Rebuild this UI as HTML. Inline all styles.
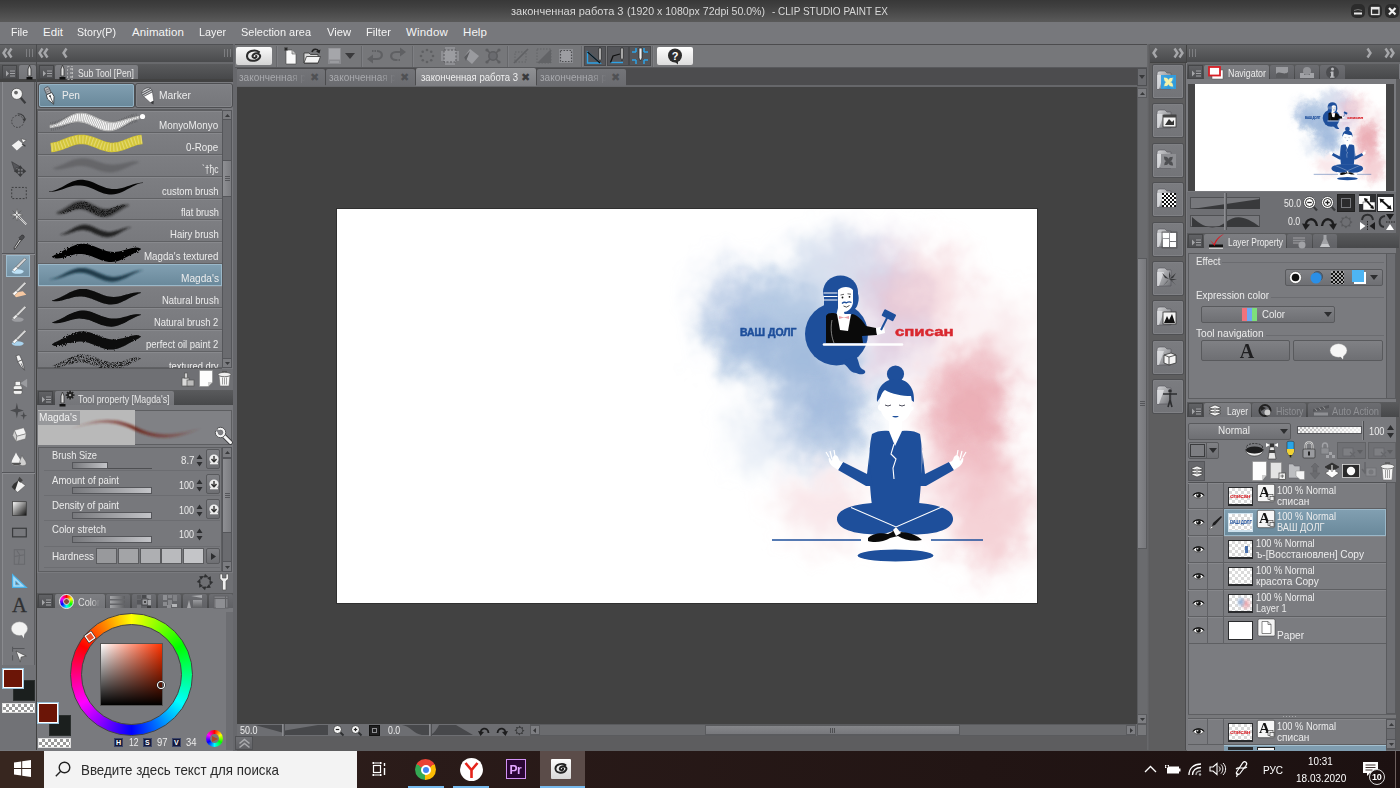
<!DOCTYPE html><html lang="ru"><head><meta charset="utf-8"><title>CLIP STUDIO PAINT EX</title><style>
*{box-sizing:border-box;margin:0;padding:0}
html,body{width:1400px;height:788px;overflow:hidden;background:#424242}
body{position:relative;font-family:"Liberation Sans",sans-serif;font-size:11px;color:#eee}
div,span.t,svg{position:absolute}
svg{overflow:visible}
span.t{white-space:nowrap;line-height:1;color:#ececec}
.pn{background:#797a7e}
.dk{background:linear-gradient(#5a5b5d,#47484a)}
.hd{background:linear-gradient(#646567,#4a4b4d)}
.btn{background:linear-gradient(#808185,#6e6f73);border:1px solid #595a5d;border-radius:2px}
.mb{background:linear-gradient(#616265,#4d4e51);border:1px solid #454648}
.tab{background:linear-gradient(#7d7e82,#747579);border-radius:2px 2px 0 0}
.itab{background:linear-gradient(#6c6d71,#606165);border-radius:2px 2px 0 0}
.row{background:#7a7b7f;border-top:1px solid #8a8b8f;border-bottom:1px solid #5e5f62}
.sel{background:linear-gradient(#86a3b5,#6f8da0);border:1px solid #a9c4d4}
</style></head><body>
<div style="left:0px;top:0px;width:1400px;height:22px;background:linear-gradient(#383838,#404040 30%,#5a5a5a)"></div>
<span class="t" style="left:511.0px;top:6px;font-size:11.5px;transform:scaleX(0.9606);transform-origin:0 0;color:#d8d8d8">законченная работа 3</span>
<span class="t" style="left:627.0px;top:6px;font-size:11.5px;transform:scaleX(0.9186);transform-origin:0 0;color:#d8d8d8">(1920 x 1080px 72dpi 50.0%)</span>
<span class="t" style="left:771.5px;top:6px;font-size:11.5px;transform:scaleX(0.8685);transform-origin:0 0;color:#d8d8d8">- CLIP STUDIO PAINT EX</span>
<div style="left:1351px;top:4px;width:14px;height:14px;background:#2b2b2b;border-radius:5px"><svg style="left:0px;top:0px;" width="14" height="14" viewBox="0 0 14 14"><path d="M3 9.5h8" stroke="#e8e8e8" stroke-width="2"/><path d="M3 6.5 Q7 4.5 11 6.5" stroke="#777" stroke-width="1" fill="none"/></svg></div>
<div style="left:1368px;top:4px;width:14px;height:14px;background:#2b2b2b;border-radius:5px"><svg style="left:0px;top:0px;" width="14" height="14" viewBox="0 0 14 14"><rect x="3.5" y="3.5" width="7.5" height="7" fill="none" stroke="#e8e8e8" stroke-width="1.3"/><path d="M3.5 4.5h7.5" stroke="#e8e8e8" stroke-width="2"/></svg></div>
<div style="left:1385px;top:4px;width:14px;height:14px;background:#2b2b2b;border-radius:5px"><svg style="left:0px;top:0px;" width="14" height="14" viewBox="0 0 14 14"><path d="M4 4 L10.5 10.5 M10.5 4 L4 10.5" stroke="#f0f0f0" stroke-width="2.2"/></svg></div>
<div style="left:0px;top:22px;width:1400px;height:22px;background:#77787c"></div>
<span class="t" style="left:11.0px;top:27px;font-size:11.5px;transform:scaleX(0.9175);transform-origin:0 0;color:#f4f4f4">File</span>
<span class="t" style="left:43.0px;top:27px;font-size:11.5px;letter-spacing:0.046px;color:#f4f4f4">Edit</span>
<span class="t" style="left:77.0px;top:27px;font-size:11.5px;transform:scaleX(0.9248);transform-origin:0 0;color:#f4f4f4">Story(P)</span>
<span class="t" style="left:132.0px;top:27px;font-size:11.5px;letter-spacing:0.096px;color:#f4f4f4">Animation</span>
<span class="t" style="left:199.0px;top:27px;font-size:11.5px;transform:scaleX(0.9387);transform-origin:0 0;color:#f4f4f4">Layer</span>
<span class="t" style="left:241.0px;top:27px;font-size:11.5px;transform:scaleX(0.9522);transform-origin:0 0;color:#f4f4f4">Selection area</span>
<span class="t" style="left:327.0px;top:27px;font-size:11.5px;transform:scaleX(0.9710);transform-origin:0 0;color:#f4f4f4">View</span>
<span class="t" style="left:366.0px;top:27px;font-size:11.5px;transform:scaleX(0.9783);transform-origin:0 0;color:#f4f4f4">Filter</span>
<span class="t" style="left:406.0px;top:27px;font-size:11.5px;letter-spacing:0.183px;color:#f4f4f4">Window</span>
<span class="t" style="left:463.0px;top:27px;font-size:11.5px;letter-spacing:0.087px;color:#f4f4f4">Help</span>
<div style="left:0px;top:44px;width:1400px;height:1px;background:#505154"></div>
<div class="hd" style="left:0px;top:45px;width:36px;height:17px;"></div>
<div class="hd" style="left:37px;top:45px;width:197px;height:17px;"></div>
<div style="left:36px;top:44px;width:1px;height:40px;background:#4a4b4d"></div>
<svg style="left:2px;top:47px;" width="12" height="12" viewBox="0 0 12 12"><path d="M4.5 1.5 L1.5 6 L4.5 10.5" fill="none" stroke="#a6a7aa" stroke-width="2.4"/><path d="M9.5 1.5 L6.5 6 L9.5 10.5" fill="none" stroke="#a6a7aa" stroke-width="2.4"/></svg>
<div style="left:26px;top:49px;width:1px;height:8px;background:#7d7e81"></div><div style="left:29px;top:49px;width:1px;height:8px;background:#7d7e81"></div><div style="left:32px;top:49px;width:1px;height:8px;background:#7d7e81"></div>
<svg style="left:38px;top:47px;" width="12" height="12" viewBox="0 0 12 12"><path d="M4.5 1.5 L1.5 6 L4.5 10.5" fill="none" stroke="#a6a7aa" stroke-width="2.4"/><path d="M9.5 1.5 L6.5 6 L9.5 10.5" fill="none" stroke="#a6a7aa" stroke-width="2.4"/></svg>
<svg style="left:62px;top:47px;" width="12" height="12" viewBox="0 0 12 12"><path d="M4.5 1.5 L1.5 6 L4.5 10.5" fill="none" stroke="#a6a7aa" stroke-width="2.4"/></svg>
<div style="left:224px;top:49px;width:1px;height:8px;background:#7d7e81"></div><div style="left:227px;top:49px;width:1px;height:8px;background:#7d7e81"></div><div style="left:230px;top:49px;width:1px;height:8px;background:#7d7e81"></div>
<div class="hd" style="left:1150px;top:45px;width:36px;height:17px;"></div>
<div class="hd" style="left:1187px;top:45px;width:213px;height:17px;"></div>
<svg style="left:1152px;top:47px;" width="12" height="12" viewBox="0 0 12 12"><path d="M4.5 1.5 L1.5 6 L4.5 10.5" fill="none" stroke="#a6a7aa" stroke-width="2.4"/></svg>
<svg style="left:1173px;top:47px;" width="12" height="12" viewBox="0 0 12 12"><path d="M1.5 1.5 L4.5 6 L1.5 10.5" fill="none" stroke="#a6a7aa" stroke-width="2.4"/><path d="M6.5 1.5 L9.5 6 L6.5 10.5" fill="none" stroke="#a6a7aa" stroke-width="2.4"/></svg>
<div style="left:1189px;top:49px;width:1px;height:8px;background:#7d7e81"></div><div style="left:1192px;top:49px;width:1px;height:8px;background:#7d7e81"></div><div style="left:1195px;top:49px;width:1px;height:8px;background:#7d7e81"></div>
<svg style="left:1366px;top:47px;" width="12" height="12" viewBox="0 0 12 12"><path d="M1.5 1.5 L4.5 6 L1.5 10.5" fill="none" stroke="#a6a7aa" stroke-width="2.4"/></svg>
<svg style="left:1384px;top:47px;" width="12" height="12" viewBox="0 0 12 12"><path d="M1.5 1.5 L4.5 6 L1.5 10.5" fill="none" stroke="#a6a7aa" stroke-width="2.4"/><path d="M6.5 1.5 L9.5 6 L6.5 10.5" fill="none" stroke="#a6a7aa" stroke-width="2.4"/></svg>
<div style="left:0px;top:62px;width:36px;height:2px;background:#68696c"></div>
<div class="dk" style="left:0px;top:64px;width:36px;height:15px;"></div>
<div style="left:37px;top:62px;width:197px;height:2px;background:#68696c"></div>
<div class="dk" style="left:37px;top:64px;width:197px;height:15px;"></div>
<div class="mb" style="left:2px;top:65px;width:15px;height:14px;"><svg style="left:0px;top:0px;" width="15" height="15" viewBox="0 0 15 15"><path d="M3 4.5 L6 7.5 L3 10.5 Z" fill="#a3a4a7"/><path d="M7 5h5M7 7.5h5M7 10h5" stroke="#a3a4a7" stroke-width="1"/></svg></div>
<div class="tab" style="left:19px;top:65px;width:17px;height:14px;"></div>
<svg style="left:26px;top:65px;" width="7" height="15" viewBox="0 0 7 15"><path d="M3.5 0 L5 4 L5 11 L2 11 L2 4 Z" fill="#ddd" stroke="#333" stroke-width="0.8"/><rect x="0.5" y="12" width="6" height="2.5" fill="#111"/></svg>
<div class="mb" style="left:39px;top:65px;width:15px;height:14px;"><svg style="left:0px;top:0px;" width="15" height="15" viewBox="0 0 15 15"><path d="M3 4.5 L6 7.5 L3 10.5 Z" fill="#a3a4a7"/><path d="M7 5h5M7 7.5h5M7 10h5" stroke="#a3a4a7" stroke-width="1"/></svg></div>
<div class="tab" style="left:55px;top:65px;width:83px;height:14px;"></div>
<svg style="left:59px;top:65px;" width="7" height="15" viewBox="0 0 7 15"><path d="M3.5 0 L5 4 L5 11 L2 11 L2 4 Z" fill="#ddd" stroke="#333" stroke-width="0.8"/><rect x="0.5" y="12" width="6" height="2.5" fill="#111"/></svg>
<svg style="left:67px;top:66px;" width="7" height="14" viewBox="0 0 7 14"><rect x="0.5" y="0.5" width="5" height="13" fill="none" stroke="#bbb" stroke-width="0.8" stroke-dasharray="2 1.5"/><path d="M3 3h3M3 7h3M3 11h3" stroke="#ccc" stroke-width="1"/></svg>
<span class="t" style="left:78.0px;top:68px;font-size:10.5px;transform:scaleX(0.8223);transform-origin:0 0;color:#e6e6e6">Sub Tool [Pen]</span>
<div style="left:235px;top:44px;width:912px;height:24px;background:#76777a;border-top:1px solid #4c4c4e;border-bottom:1px solid #58595c"></div>
<div style="left:236px;top:47px;width:36px;height:18px;background:linear-gradient(#fbfbfb,#d4d4d4);border-radius:2px"><svg style="left:8px;top:1px;" width="21" height="16" viewBox="0 0 18 14"><path d="M13 3.5 C9 0.5 2 3 2.5 7.5 C3 12 11 12.5 13.5 8.5 C15 6 12 4 9.5 4.8 C7 5.6 6.5 8 8.5 8.6 C10 9 11 8 10.5 7" fill="none" stroke="#2b2b2b" stroke-width="1.8" stroke-linecap="round"/></svg></div>
<div style="left:276px;top:46px;width:1px;height:21px;background:#66676a"></div>
<div style="left:277px;top:46px;width:1px;height:21px;background:#7e7f83"></div>
<div style="left:361px;top:46px;width:1px;height:21px;background:#66676a"></div>
<div style="left:362px;top:46px;width:1px;height:21px;background:#7e7f83"></div>
<div style="left:412px;top:46px;width:1px;height:21px;background:#66676a"></div>
<div style="left:413px;top:46px;width:1px;height:21px;background:#7e7f83"></div>
<div style="left:507px;top:46px;width:1px;height:21px;background:#66676a"></div>
<div style="left:508px;top:46px;width:1px;height:21px;background:#7e7f83"></div>
<div style="left:581px;top:46px;width:1px;height:21px;background:#66676a"></div>
<div style="left:582px;top:46px;width:1px;height:21px;background:#7e7f83"></div>
<div style="left:652px;top:46px;width:1px;height:21px;background:#66676a"></div>
<div style="left:653px;top:46px;width:1px;height:21px;background:#7e7f83"></div>
<svg style="left:284px;top:47px;" width="14" height="18" viewBox="0 0 14 18"><path d="M2 3 L8 3 L12 7 L12 17 L2 17 Z" fill="#fafafa" stroke="#444" stroke-width="0.6"/><path d="M8 3 L8 7 L12 7" fill="#ccc" stroke="#555" stroke-width="0.6"/><path d="M0 2 L4 2 M2 0 L2 4 M0.6 0.6 L3.4 3.4 M3.4 0.6 L0.6 3.4" stroke="#222" stroke-width="0.8"/></svg>
<svg style="left:303px;top:47px;" width="18" height="18" viewBox="0 0 18 18"><path d="M1 16 L1 6 L6 6 L7.5 7.5 L15 7.5 L15 16 Z" fill="#d8d8d8" stroke="#333" stroke-width="0.8"/><path d="M1 16 L3.5 9.5 L17.5 9.5 L15 16 Z" fill="#f4f4f4" stroke="#333" stroke-width="0.8"/><path d="M9 5 C10 1.5 14 1.5 15.5 4" fill="none" stroke="#222" stroke-width="1.6"/><path d="M17.5 2.5 L16.5 6.5 L13 4.5 Z" fill="#222"/></svg>
<svg style="left:327px;top:47px;" width="16" height="18" viewBox="0 0 16 18"><rect x="1" y="1" width="13" height="16" fill="#8a8b8f"/><rect x="2" y="1.5" width="11" height="11" fill="#a5a6aa"/><rect x="3" y="14" width="9" height="2" fill="#9a9b9f"/></svg>
<svg style="left:345px;top:53px;" width="10" height="6" viewBox="0 0 10 6"><path d="M0 0 L10 0 L5 6 Z" fill="#3a3a3c"/></svg>
<svg style="left:367px;top:47px;" width="18" height="18" viewBox="0 0 18 18"><path d="M5 4 H10" stroke="#5f6063" stroke-width="2" stroke-dasharray="1.500 1"/><path d="M10 4 C16.500 4 16.500 12 10 12 H5" fill="none" stroke="#5f6063" stroke-width="2.200"/><path d="M0 12 L6 7.500 L6 16.500 Z" fill="#5f6063"/></svg>
<svg style="left:388px;top:47px;" width="18" height="18" viewBox="0 0 18 18"><path d="M8 13 H13" stroke="#5f6063" stroke-width="2" stroke-dasharray="1.500 1"/><path d="M8 13 C1.500 13 1.500 5 8 5 H13" fill="none" stroke="#5f6063" stroke-width="2.200"/><path d="M18 5 L12 0.500 L12 9.500 Z" fill="#5f6063"/></svg>
<svg style="left:419px;top:48px;" width="16" height="16" viewBox="0 0 16 16"><circle cx="14.0" cy="8.0" r="1.3" fill="#5f6063"/><circle cx="12.2" cy="12.2" r="1.3" fill="#5f6063"/><circle cx="8.0" cy="14.0" r="1.3" fill="#5f6063"/><circle cx="3.8" cy="12.2" r="1.3" fill="#5f6063"/><circle cx="2.0" cy="8.0" r="1.3" fill="#5f6063"/><circle cx="3.7" cy="3.8" r="1.3" fill="#5f6063"/><circle cx="8.0" cy="2.0" r="1.3" fill="#5f6063"/><circle cx="12.2" cy="3.7" r="1.3" fill="#5f6063"/></svg>
<svg style="left:440px;top:47px;" width="20" height="18" viewBox="0 0 20 18"><rect x="1" y="4" width="18" height="10" fill="#8e8f93"/><rect x="5" y="0" width="10" height="18" fill="#8e8f93"/><rect x="4" y="3" width="12" height="12" fill="#9c9da1" stroke="#56575a" stroke-width="1" stroke-dasharray="2 1.5"/></svg>
<svg style="left:462px;top:47px;" width="18" height="18" viewBox="0 0 18 18"><path d="M8 2 L17 9 L10 17 L2 10 Z" fill="#9a9b9f"/><path d="M2 10 L8 4 L4 14 Z" fill="#5c5d60"/></svg>
<svg style="left:485px;top:48px;" width="16" height="16" viewBox="0 0 16 16"><path d="M2 2 L14 14 M14 2 L2 14" stroke="#5d5e61" stroke-width="1.6"/><circle cx="8" cy="8" r="4.2" fill="#6a6b6f" stroke="#5d5e61" stroke-width="1.6"/><circle cx="2" cy="2" r="1.6" fill="#5d5e61"/><circle cx="14" cy="2" r="1.6" fill="#5d5e61"/><circle cx="2" cy="14" r="1.6" fill="#5d5e61"/><circle cx="14" cy="14" r="1.6" fill="#5d5e61"/></svg>
<svg style="left:513px;top:48px;" width="16" height="16" viewBox="0 0 16 16"><path d="M1 15 L15 1" stroke="#5f6063" stroke-width="1.6"/><rect x="2" y="4" width="11" height="10" fill="none" stroke="#636467" stroke-width="1" stroke-dasharray="1.5 1.5"/></svg>
<svg style="left:536px;top:48px;" width="16" height="16" viewBox="0 0 16 16"><path d="M1 15 L15 1 L15 15 Z" fill="#626366"/><rect x="1" y="1" width="14" height="14" fill="none" stroke="#636467" stroke-width="1" stroke-dasharray="1.5 1.5"/></svg>
<svg style="left:558px;top:48px;" width="16" height="16" viewBox="0 0 16 16"><rect x="1" y="1" width="14" height="14" fill="#8d8e92"/><rect x="2.5" y="2.5" width="11" height="11" fill="#9d9ea2" stroke="#4e4f52" stroke-width="1.2" stroke-dasharray="1.5 1.5"/></svg>
<div style="left:584px;top:46px;width:22px;height:20px;background:#55565a;border:1px solid #48494c"></div>
<div style="left:607px;top:46px;width:22px;height:20px;background:#55565a;border:1px solid #48494c"></div>
<div style="left:629px;top:46px;width:22px;height:20px;background:#55565a;border:1px solid #48494c"></div>
<svg style="left:586px;top:47px;" width="18" height="18" viewBox="0 0 18 18"><path d="M1.5 5 L1.5 16 L14 16 Z" fill="none" stroke="#2ea3e6" stroke-width="1.4"/><path d="M1.5 5 L14 16" stroke="#111" stroke-width="1.3"/><path d="M13 1 L15 1 L15 12 L14 15 L13 12 Z" fill="#eee" stroke="#222" stroke-width="0.7"/></svg>
<svg style="left:609px;top:47px;" width="18" height="18" viewBox="0 0 18 18"><path d="M1.5 15.5 L14 15.5" stroke="#2ea3e6" stroke-width="1.4"/><path d="M1.5 15.5 L4 9 L11 7" fill="none" stroke="#111" stroke-width="1.3"/><path d="M12 1 L14 1 L14 11 L13 14 L12 11 Z" fill="#eee" stroke="#222" stroke-width="0.7"/></svg>
<svg style="left:631px;top:47px;" width="18" height="18" viewBox="0 0 18 18"><path d="M1 5h4M1 13h4M13 5h4M13 13h4M5 1v4M5 13v4M13 1v4M13 13v4" stroke="#2ea3e6" stroke-width="1.5"/><path d="M8 1 L11 1 L11 11 L9.5 14 L8 11 Z" fill="#eee" stroke="#222" stroke-width="0.7"/></svg>
<div style="left:657px;top:47px;width:36px;height:18px;background:linear-gradient(#ffffff,#dcdcdc);border-radius:2px"><svg style="left:10px;top:1px;" width="16" height="16" viewBox="0 0 16 16"><circle cx="8" cy="7.5" r="7" fill="#2d2d2d"/><path d="M8 14 L11 16.5 L11 13 Z" fill="#2d2d2d"/><text x="8" y="11.5" font-size="11" font-weight="bold" text-anchor="middle" fill="#fff" font-family="Liberation Sans, sans-serif">?</text></svg></div>
<div style="left:235px;top:68px;width:912px;height:19px;background:#4c4c4e"></div>
<div style="left:235px;top:85px;width:912px;height:2px;background:#66676a"></div>
<div style="left:236px;top:69px;width:89px;height:17px;background:linear-gradient(#737478,#6b6c70);border-radius:2px 2px 0 0"></div>
<span class="t" style="left:239.0px;top:72px;font-size:10.5px;transform:scaleX(0.9546);transform-origin:0 0;color:#a9aaae;-webkit-mask-image:linear-gradient(90deg,#000 75%,transparent 100%)">законченная р</span>
<span class="t" style="left:310.0px;top:72px;font-size:10.5px;color:#505154">&#10006;</span>
<div style="left:326px;top:69px;width:89px;height:17px;background:linear-gradient(#737478,#6b6c70);border-radius:2px 2px 0 0"></div>
<span class="t" style="left:329.0px;top:72px;font-size:10.5px;transform:scaleX(0.9546);transform-origin:0 0;color:#a9aaae;-webkit-mask-image:linear-gradient(90deg,#000 75%,transparent 100%)">законченная р</span>
<span class="t" style="left:400.0px;top:72px;font-size:10.5px;color:#505154">&#10006;</span>
<div style="left:416px;top:68px;width:120px;height:18px;background:linear-gradient(#909194,#7d7e82);border-radius:2px 2px 0 0"></div>
<span class="t" style="left:421.0px;top:72px;font-size:10.5px;transform:scaleX(0.9071);transform-origin:0 0;color:#f0f0f0">законченная работа 3</span>
<span class="t" style="left:521.0px;top:72px;font-size:10.5px;color:#3a3a3c">&#10006;</span>
<div style="left:537px;top:69px;width:89px;height:17px;background:linear-gradient(#737478,#6b6c70);border-radius:2px 2px 0 0"></div>
<span class="t" style="left:540.0px;top:72px;font-size:10.5px;transform:scaleX(0.9546);transform-origin:0 0;color:#a9aaae;-webkit-mask-image:linear-gradient(90deg,#000 75%,transparent 100%)">законченная р</span>
<span class="t" style="left:611.0px;top:72px;font-size:10.5px;color:#505154">&#10006;</span>
<div style="left:1137px;top:68px;width:10px;height:18px;background:#6a6b6f;border:1px solid #4e4f52"><svg style="left:1px;top:6px;" width="6" height="4" viewBox="0 0 6 4"><path d="M0 0 L6 0 L3 4 Z" fill="#38393b"/></svg></div>
<div style="left:0px;top:82px;width:36px;height:668px;background:#717276"></div>
<div style="left:2px;top:82px;width:33px;height:583px;background:#77787c;border-left:1px solid #8a8b8f;border-right:1px solid #5c5d60"></div>
<div style="left:2px;top:253px;width:33px;height:1px;background:#55565a"></div>
<div style="left:2px;top:254px;width:33px;height:1px;background:#8b8c90"></div>
<div style="left:2px;top:472px;width:33px;height:1px;background:#55565a"></div>
<div style="left:2px;top:473px;width:33px;height:1px;background:#8b8c90"></div>
<div style="left:6px;top:255px;width:24px;height:22px;background:linear-gradient(#88a5b7,#7391a4);border:1px solid #9dbbcd"></div>
<svg style="left:10px;top:87px;" width="18" height="18" viewBox="0 0 21 21"><circle cx="8" cy="8" r="6.5" fill="#f2f2f2" stroke="#555" stroke-width="1"/><circle cx="7" cy="6.5" r="2.2" fill="#666"/><path d="M12.5 12.5 L18 19" stroke="#3a3b3d" stroke-width="2.6"/></svg>
<svg style="left:10px;top:112px;" width="18" height="18" viewBox="0 0 21 21"><circle cx="9" cy="11" r="7" fill="none" stroke="#3a3b3d" stroke-width="1" stroke-dasharray="2 1.6"/><path d="M9 2 C15 2 18 6 17 10" fill="none" stroke="#3a3b3d" stroke-width="1.2"/><path d="M14.5 8 L17 11.5 L19 7.5 Z" fill="#3a3b3d"/></svg>
<svg style="left:10px;top:136px;" width="18" height="18" viewBox="0 0 21 21"><path d="M2 11 L10 5 L16 10 L8 17 Z" fill="#f2f2f2"/><path d="M13 3 L19 5 L15 8 Z" fill="#f2f2f2" stroke="#444" stroke-width="0.6"/><path d="M14 9 L18 12" stroke="#3a3b3d" stroke-width="1.2"/></svg>
<svg style="left:10px;top:160px;" width="18" height="18" viewBox="0 0 21 21"><path d="M2 2 L12 8 L7 9 L6 14 Z" fill="#55565a" stroke="#3a3b3d" stroke-width="0.8"/><path d="M12 7 L12 19 M6 13 L18 13 M12 19 l-2 -2.5 h4 Z M12 7 l-2 2.5 h4 Z M6 13 l2.5 -2 v4 Z M18 13 l-2.5 -2 v4 Z" stroke="#3a3b3d" stroke-width="1.2" fill="#3a3b3d"/></svg>
<svg style="left:10px;top:184px;" width="18" height="18" viewBox="0 0 21 21"><rect x="2" y="4" width="17" height="13" fill="none" stroke="#3a3b3d" stroke-width="1.1" stroke-dasharray="2.2 1.8"/></svg>
<svg style="left:10px;top:208px;" width="18" height="18" viewBox="0 0 21 21"><path d="M9 9 L19 19" stroke="#eee" stroke-width="2"/><path d="M9 9 L19 19" stroke="#555" stroke-width="0.6"/><path d="M8 1 L9.5 6.5 L15 8 L9.5 9.5 L8 15 L6.5 9.5 L1 8 L6.5 6.5 Z" fill="#f2f2f2" stroke="#555" stroke-width="0.6"/><path d="M3 3 L13 13 M13 3 L3 13" stroke="#555" stroke-width="0.8"/></svg>
<svg style="left:10px;top:233px;" width="18" height="18" viewBox="0 0 21 21"><path d="M13 3 C15 1 18 4 16 6 L13.5 8.5 L10.5 5.5 Z" fill="#4a4b4e" stroke="#2a2a2b" stroke-width="0.7"/><path d="M11.5 7 L13 8.500 L6.500 18 L5 19 L5 17 Z" fill="#ddd" stroke="#2a2a2b" stroke-width="1"/></svg>
<svg style="left:10px;top:257px;" width="18" height="18" viewBox="0 0 21 21"><ellipse cx="9" cy="17" rx="7" ry="2.6" fill="#bfe2f7"/><path d="M17 1 L19 3 L9 13 L7 11 Z" fill="#d8d8d8" stroke="#555" stroke-width="0.6"/><path d="M7 11 L9 13 L5 17 L3 15 Z" fill="#fff" stroke="#666" stroke-width="0.5"/></svg>
<svg style="left:10px;top:281px;" width="18" height="18" viewBox="0 0 21 21"><path d="M3 14 L15 12 L19 16 L7 19 Z" fill="#f6c8a2"/><ellipse cx="9" cy="17" rx="7" ry="2.6" fill="none"/><path d="M17 1 L19 3 L9 13 L7 11 Z" fill="#d8d8d8" stroke="#555" stroke-width="0.6"/><path d="M7 11 L9 13 L5 17 L3 15 Z" fill="#fff" stroke="#666" stroke-width="0.5"/></svg>
<svg style="left:10px;top:305px;" width="18" height="18" viewBox="0 0 21 21"><ellipse cx="9" cy="17" rx="7" ry="2.6" fill="#9c9da1"/><path d="M17 1 L19 3 L9 13 L7 11 Z" fill="#d8d8d8" stroke="#555" stroke-width="0.6"/><path d="M7 11 L9 13 L5 17 L3 15 Z" fill="#eee" stroke="#666" stroke-width="0.5"/></svg>
<svg style="left:10px;top:329px;" width="18" height="18" viewBox="0 0 21 21"><ellipse cx="9" cy="17" rx="7" ry="2.6" fill="#a9d3ee"/><path d="M17 1 L19 3 L9 13 L7 11 Z" fill="#d8d8d8" stroke="#555" stroke-width="0.6"/><path d="M7 11 L9 13 L5 17 L3 15 Z" fill="#fff" stroke="#666" stroke-width="0.5"/></svg>
<svg style="left:10px;top:354px;" width="18" height="18" viewBox="0 0 21 21"><path d="M7 2 L11 1 L14 7 L9 9 Z" fill="#f2f2f2" stroke="#3a3b3d" stroke-width="0.7"/><path d="M9 9 L14 7 L16 14 L17 19 L13 15 Z" fill="#f2f2f2" stroke="#3a3b3d" stroke-width="0.7"/><path d="M13 11 L16 18" stroke="#3a3b3d" stroke-width="0.8"/></svg>
<svg style="left:10px;top:378px;" width="18" height="18" viewBox="0 0 21 21"><path d="M12 6 L20 1 L20 11 Z" fill="#9a9b9f"/><rect x="4" y="9" width="10" height="10" rx="2" fill="#f2f2f2" stroke="#555" stroke-width="0.6"/><rect x="6" y="4" width="6" height="5" fill="#f2f2f2" stroke="#555" stroke-width="0.6"/><rect x="4" y="13" width="10" height="2" fill="#555"/></svg>
<svg style="left:10px;top:402px;" width="18" height="18" viewBox="0 0 21 21"><path d="M8 1 L9.5 8 L16 10 L9.5 12 L8 19 L6.5 12 L0 10 L6.5 8 Z" fill="#4a4b4e"/><path d="M16 11 L17 15 L20 16 L17 17 L16 21 L15 17 L12 16 L15 15 Z" fill="#4a4b4e"/></svg>
<svg style="left:10px;top:426px;" width="18" height="18" viewBox="0 0 21 21"><path d="M5 5 L16 2 L19 9 L8 12 Z" fill="#f2f2f2" stroke="#666" stroke-width="0.6"/><path d="M5 5 L8 12 L7 18 L3 11 Z" fill="#cfcfcf" stroke="#666" stroke-width="0.6"/><path d="M8 12 L19 9 L18 15 L7 18 Z" fill="#e4e4e4" stroke="#666" stroke-width="0.6"/></svg>
<svg style="left:10px;top:450px;" width="18" height="18" viewBox="0 0 21 21"><path d="M7 3 C9 8 13 11 13 15 C13 19 2 19 2 15 C2 11 5 8 7 3 Z" fill="#f2f2f2"/><path d="M14 6 C15 10 19 12 19 16 C19 19 11 19 11 16 C11 12 13 10 14 6 Z" fill="#d0d0d0" stroke="#555" stroke-width="0.5"/><path d="M2 15 C2 19 13 19 13 15 Z" fill="#555"/></svg>
<svg style="left:10px;top:476px;" width="18" height="18" viewBox="0 0 21 21"><path d="M2 13 L10 5 L18 11 L9 19 Z" fill="#f2f2f2" stroke="#444" stroke-width="0.6"/><path d="M2 13 C4 9 6 8 10 5 L6 17 Z" fill="#333"/><path d="M11 1 L15 5 L12 8 L9 5 Z" fill="#444"/></svg>
<svg style="left:10px;top:500px;" width="18" height="18" viewBox="0 0 21 21"><defs><linearGradient id="tg" x1="0" y1="0" x2="1" y2="1"><stop offset="0" stop-color="#fff"/><stop offset="1" stop-color="#111"/></linearGradient></defs><rect x="3" y="2" width="16" height="16" fill="url(#tg)" stroke="#333" stroke-width="0.8"/></svg>
<svg style="left:10px;top:524px;" width="18" height="18" viewBox="0 0 21 21"><rect x="3" y="5" width="16" height="10" fill="none" stroke="#3a3b3d" stroke-width="1.4"/></svg>
<svg style="left:10px;top:548px;" width="18" height="18" viewBox="0 0 21 21"><rect x="5" y="2" width="12" height="17" fill="none" stroke="#68696d" stroke-width="1.2"/><path d="M5 10 L17 8 M11 9 L10 19 M8 3 L12 9" stroke="#68696d" stroke-width="1.2"/></svg>
<svg style="left:10px;top:572px;" width="18" height="18" viewBox="0 0 21 21"><path d="M3 3 L19 18 L3 18 Z" fill="#a5daf6" stroke="#49b2ea" stroke-width="1.400"/><path d="M6.500 10.500 L11 15 L6.500 15 Z" fill="#77787c" stroke="#49b2ea" stroke-width="0.800"/></svg>
<svg style="left:10px;top:596px;" width="18" height="18" viewBox="0 0 21 21"><text x="11" y="19" font-family="Liberation Serif, serif" font-size="24" text-anchor="middle" fill="#2f3032" stroke="#2f3032" stroke-width="0.400">A</text></svg>
<svg style="left:10px;top:621px;" width="18" height="18" viewBox="0 0 21 21"><ellipse cx="11" cy="9" rx="9.5" ry="8" fill="#f2f2f2" stroke="#999" stroke-width="0.5"/><path d="M13 15 L16 20 L17 14 Z" fill="#f2f2f2"/></svg>
<svg style="left:10px;top:645px;" width="18" height="18" viewBox="0 0 21 21"><path d="M3 2 L3 8 M3 12 L3 18 M3 4 L17 4" stroke="#55565a" stroke-width="1.2"/><path d="M7 7 L19 13 L13 14 L12 20 Z" fill="#f2f2f2" stroke="#444" stroke-width="0.8"/></svg>
<div style="left:13px;top:680px;width:22px;height:21px;background:#1b1f1e;border:1px solid #2b2f2e"></div><div style="left:2px;top:668px;width:22px;height:21px;background:#6b1507;border:1px solid #9ac3dc;box-shadow:inset 0 0 0 1px #fff"></div><div style="left:2px;top:703px;width:33px;height:10px;background-color:#fff;background-image:linear-gradient(45deg,#999 25%,transparent 25%,transparent 75%,#999 75%),linear-gradient(45deg,#999 25%,transparent 25%,transparent 75%,#999 75%);background-size:6px 6px;background-position:0 0,3px 3px;border:1px solid #ddd"></div>
<div class="pn" style="left:37px;top:82px;width:197px;height:668px;"></div>
<div style="left:234px;top:44px;width:1px;height:706px;background:#3e3f41"></div>
<div style="left:39px;top:84px;width:95px;height:23px;background:linear-gradient(#809eb0,#6a899b);border:1px solid #93b2c4;border-radius:2px;box-shadow:0 0 0 1px #4e4f52"></div>
<div style="left:136px;top:84px;width:96px;height:23px;background:linear-gradient(#7f8084,#76777b);border:1px solid #838488;border-radius:2px;box-shadow:0 0 0 1px #4e4f52"></div>
<svg style="left:43px;top:86px;" width="14" height="20" viewBox="0 0 14 20"><g transform="rotate(-24 7 10)"><rect x="4.500" y="0.500" width="5" height="7" rx="1.500" fill="#b4b5b8" stroke="#3a3b3d" stroke-width="0.600"/><path d="M5 3h4M5 5h4" stroke="#6a6b6f" stroke-width="0.700"/><path d="M4 7.500 L10 7.500 L10.500 12 L7 19 L3.500 12 Z" fill="#fdfdfd" stroke="#2d2e30" stroke-width="0.700"/><path d="M7 10 V18" stroke="#2d2e30" stroke-width="0.700"/><circle cx="7" cy="10" r="0.900" fill="#2d2e30"/></g></svg>
<span class="t" style="left:62.0px;top:90px;font-size:11.5px;transform:scaleX(0.8797);transform-origin:0 0;">Pen</span>
<svg style="left:141px;top:86px;" width="16" height="20" viewBox="0 0 16 20"><g transform="rotate(-28 8 10)"><path d="M2.500 5 C3 0.500 13 0.500 13.500 5 L13 8 L3 8 Z" fill="#d0d1d4" stroke="#4a4b4e" stroke-width="0.600"/><path d="M2.800 4 H13.200 M2.600 6 H13.400" stroke="#55565a" stroke-width="0.900"/><path d="M3 8 L13 8 L10 16.500 L6 16.500 Z" fill="#fdfdfd" stroke="#55565a" stroke-width="0.600"/><path d="M6 16.500 L10 16.500 L8 19.500 Z" fill="#3a3b3d"/></g></svg>
<span class="t" style="left:159.0px;top:90px;font-size:11.5px;transform:scaleX(0.8944);transform-origin:0 0;">Marker</span>
<div style="left:37px;top:109px;width:185px;height:260px;background:#5c5d60"></div>
<div style="left:38px;top:111px;width:184px;height:22px;background:linear-gradient(#7d7e82,#78797d);border-top:1px solid #88898d;border-bottom:1px solid #606164"></div>
<span class="t" style="left:159.4px;top:120px;font-size:10.5px;transform:scaleX(0.9377);transform-origin:0 0;">MonyoMonyo</span>
<div style="left:38px;top:133px;width:184px;height:22px;background:linear-gradient(#7d7e82,#78797d);border-top:1px solid #88898d;border-bottom:1px solid #606164"></div>
<span class="t" style="left:186.3px;top:142px;font-size:10.5px;transform:scaleX(0.9351);transform-origin:0 0;">0-Rope</span>
<div style="left:38px;top:155px;width:184px;height:22px;background:linear-gradient(#7d7e82,#78797d);border-top:1px solid #88898d;border-bottom:1px solid #606164"></div>
<span class="t" style="left:202.0px;top:164px;font-size:10.5px;transform:scaleX(0.8079);transform-origin:0 0;">`†ђс</span>
<div style="left:38px;top:177px;width:184px;height:22px;background:linear-gradient(#7d7e82,#78797d);border-top:1px solid #88898d;border-bottom:1px solid #606164"></div>
<span class="t" style="left:161.9px;top:186px;font-size:10.5px;transform:scaleX(0.8981);transform-origin:0 0;">custom brush</span>
<div style="left:38px;top:199px;width:184px;height:21px;background:linear-gradient(#7d7e82,#78797d);border-top:1px solid #88898d;border-bottom:1px solid #606164"></div>
<span class="t" style="left:180.5px;top:207px;font-size:10.5px;transform:scaleX(0.8799);transform-origin:0 0;">flat brush</span>
<div style="left:38px;top:220px;width:184px;height:22px;background:linear-gradient(#7d7e82,#78797d);border-top:1px solid #88898d;border-bottom:1px solid #606164"></div>
<span class="t" style="left:169.8px;top:229px;font-size:10.5px;transform:scaleX(0.9072);transform-origin:0 0;">Hairy brush</span>
<div style="left:38px;top:242px;width:184px;height:22px;background:linear-gradient(#7d7e82,#78797d);border-top:1px solid #88898d;border-bottom:1px solid #606164"></div>
<span class="t" style="left:144.1px;top:251px;font-size:10.5px;transform:scaleX(0.9276);transform-origin:0 0;">Magda's textured</span>
<div style="left:38px;top:264px;width:184px;height:22px;background:linear-gradient(#819fb1,#6a899b);border:1px solid #9bb8c9"></div>
<span class="t" style="left:180.5px;top:273px;font-size:10.5px;transform:scaleX(0.9655);transform-origin:0 0;">Magda's</span>
<div style="left:38px;top:286px;width:184px;height:22px;background:linear-gradient(#7d7e82,#78797d);border-top:1px solid #88898d;border-bottom:1px solid #606164"></div>
<span class="t" style="left:161.6px;top:295px;font-size:10.5px;transform:scaleX(0.9028);transform-origin:0 0;">Natural brush</span>
<div style="left:38px;top:308px;width:184px;height:22px;background:linear-gradient(#7d7e82,#78797d);border-top:1px solid #88898d;border-bottom:1px solid #606164"></div>
<span class="t" style="left:154.3px;top:317px;font-size:10.5px;transform:scaleX(0.8944);transform-origin:0 0;">Natural brush 2</span>
<div style="left:38px;top:330px;width:184px;height:22px;background:linear-gradient(#7d7e82,#78797d);border-top:1px solid #88898d;border-bottom:1px solid #606164"></div>
<span class="t" style="left:146.2px;top:339px;font-size:10.5px;transform:scaleX(0.9042);transform-origin:0 0;">perfect oil paint 2</span>
<div style="left:38px;top:352px;width:184px;height:16px;background:linear-gradient(#7d7e82,#78797d);border-top:1px solid #88898d;border-bottom:1px solid #606164"></div>
<div style="left:38px;top:352px;width:184px;height:16px;overflow:hidden"><span class="t" style="left:131.0px;top:9px;font-size:10.5px;transform:scaleX(0.8929);transform-origin:0 0;">textured dry</span></div>
<div style="left:38px;top:110px;width:184px;height:258px;overflow:hidden"><svg style="left:-38px;top:-110px;" width="222" height="368" viewBox="0 0 222 368"><defs><filter id="b1"><feGaussianBlur stdDeviation="1"/></filter><filter id="b2"><feGaussianBlur stdDeviation="1.8"/></filter><filter id="b05"><feGaussianBlur stdDeviation="0.6"/></filter><filter id="rough"><feTurbulence type="fractalNoise" baseFrequency="0.9" numOctaves="2" seed="3" result="n"/><feDisplacementMap in="SourceGraphic" in2="n" scale="3"/></filter><filter id="spk"><feTurbulence type="fractalNoise" baseFrequency="1.2" numOctaves="2" seed="8" result="n"/><feColorMatrix in="n" type="matrix" values="0 0 0 0 0 0 0 0 0 0 0 0 0 0 0 0 0 0 -4 2.4" result="m"/><feComposite in="SourceGraphic" in2="m" operator="in"/></filter></defs><path d="M50.0 125.2 L52.5 125.0 L54.9 124.4 L57.4 123.4 L59.9 122.1 L62.4 120.6 L64.8 119.1 L67.3 117.6 L69.8 116.2 L72.2 115.1 L74.7 114.1 L77.2 113.5 L79.7 113.1 L82.1 113.1 L84.6 113.4 L87.1 113.9 L89.6 114.7 L92.0 115.7 L94.5 116.8 L97.0 118.0 L99.4 119.1 L101.9 120.1 L104.4 121.0 L106.9 121.7 L109.3 122.1 L111.8 122.3 L114.3 122.2 L116.8 121.9 L119.2 121.3 L121.7 120.7 L124.2 119.9 L126.6 119.2 L129.1 118.5 L131.6 117.9 L134.1 117.3 L136.5 116.7 L139.0 116.3 L139.0 118.8 L136.5 119.2 L134.1 119.8 L131.6 120.8 L129.1 122.3 L126.6 123.8 L124.2 125.3 L121.7 126.7 L119.2 128.1 L116.8 129.2 L114.3 130.0 L111.8 130.6 L109.3 130.9 L106.9 130.8 L104.4 130.5 L101.9 129.8 L99.4 129.0 L97.0 127.9 L94.5 126.8 L92.0 125.7 L89.6 124.6 L87.1 123.6 L84.6 122.8 L82.1 122.2 L79.7 121.9 L77.2 121.8 L74.7 122.0 L72.2 122.4 L69.8 123.0 L67.3 123.7 L64.8 124.4 L62.4 125.2 L59.9 125.9 L57.4 126.4 L54.9 126.9 L52.5 127.5 L50.0 127.7 Z" fill="#f6f6f6" stroke="#3a3a3a" stroke-width="0.8"/><path d="M51.0 126.5 L53.4 126.2 L55.8 125.7 L58.2 124.9 L60.7 124.0 L63.1 122.9 L65.5 121.8 L67.9 120.6 L70.3 119.6 L72.8 118.7 L75.2 118.1 L77.6 117.6 L80.0 117.5 L82.4 117.7 L84.8 118.1 L87.2 118.8 L89.7 119.7 L92.1 120.7 L94.5 121.8 L96.9 122.9 L99.3 124.0 L101.8 125.0 L104.2 125.7 L106.6 126.2 L109.0 126.5 L111.4 126.4 L113.8 126.1 L116.2 125.5 L118.7 124.7 L121.1 123.7 L123.5 122.6 L125.9 121.5 L128.3 120.4 L130.8 119.4 L133.2 118.5 L135.6 117.9 L138.0 117.6" fill="none" stroke="#444" stroke-width="9" stroke-dasharray="0.5 1.3" opacity=".55"/><path d="M50.0 125.2 L52.5 125.0 L54.9 124.4 L57.4 123.4 L59.9 122.1 L62.4 120.6 L64.8 119.1 L67.3 117.6 L69.8 116.2 L72.2 115.1 L74.7 114.1 L77.2 113.5 L79.7 113.1 L82.1 113.1 L84.6 113.4 L87.1 113.9 L89.6 114.7 L92.0 115.7 L94.5 116.8 L97.0 118.0 L99.4 119.1 L101.9 120.1 L104.4 121.0 L106.9 121.7 L109.3 122.1 L111.8 122.3 L114.3 122.2 L116.8 121.9 L119.2 121.3 L121.7 120.7 L124.2 119.9 L126.6 119.2 L129.1 118.5 L131.6 117.9 L134.1 117.3 L136.5 116.7 L139.0 116.3 L139.0 118.8 L136.5 119.2 L134.1 119.8 L131.6 120.8 L129.1 122.3 L126.6 123.8 L124.2 125.3 L121.7 126.7 L119.2 128.1 L116.8 129.2 L114.3 130.0 L111.8 130.6 L109.3 130.9 L106.9 130.8 L104.4 130.5 L101.9 129.8 L99.4 129.0 L97.0 127.9 L94.5 126.8 L92.0 125.7 L89.6 124.6 L87.1 123.6 L84.6 122.8 L82.1 122.2 L79.7 121.9 L77.2 121.8 L74.7 122.0 L72.2 122.4 L69.8 123.0 L67.3 123.7 L64.8 124.4 L62.4 125.2 L59.9 125.9 L57.4 126.4 L54.9 126.9 L52.5 127.5 L50.0 127.7 Z" fill="none" stroke="#eee" stroke-width="0.7"/><circle cx="142.5" cy="116.5" r="2.6" fill="#fff"/><path d="M51.0 147.4 L53.5 147.2 L56.1 146.7 L58.6 146.0 L61.1 145.2 L63.6 144.2 L66.2 143.2 L68.7 142.2 L71.2 141.3 L73.8 140.5 L76.3 139.9 L78.8 139.5 L81.3 139.4 L83.9 139.5 L86.4 139.9 L88.9 140.5 L91.4 141.3 L94.0 142.2 L96.5 143.2 L99.0 144.2 L101.6 145.2 L104.1 146.0 L106.6 146.7 L109.1 147.2 L111.7 147.4 L114.2 147.3 L116.7 147.1 L119.2 146.5 L121.8 145.8 L124.3 144.9 L126.8 143.9 L129.4 142.9 L131.9 141.9 L134.4 141.1 L136.9 140.3 L139.5 139.8 L142.0 139.5" fill="none" stroke="#d6c838" stroke-width="9.5"/><path d="M51.0 147.4 L53.5 147.2 L56.1 146.7 L58.6 146.0 L61.1 145.2 L63.6 144.2 L66.2 143.2 L68.7 142.2 L71.2 141.3 L73.8 140.5 L76.3 139.9 L78.8 139.5 L81.3 139.4 L83.9 139.5 L86.4 139.9 L88.9 140.5 L91.4 141.3 L94.0 142.2 L96.5 143.2 L99.0 144.2 L101.6 145.2 L104.1 146.0 L106.6 146.7 L109.1 147.2 L111.7 147.4 L114.2 147.3 L116.7 147.1 L119.2 146.5 L121.8 145.8 L124.3 144.9 L126.8 143.9 L129.4 142.9 L131.9 141.9 L134.4 141.1 L136.9 140.3 L139.5 139.8 L142.0 139.5" fill="none" stroke="#efe58a" stroke-width="8" stroke-dasharray="1.8 1.4" opacity=".6"/><path d="M51.0 147.4 L53.5 147.2 L56.1 146.7 L58.6 146.0 L61.1 145.2 L63.6 144.2 L66.2 143.2 L68.7 142.2 L71.2 141.3 L73.8 140.5 L76.3 139.9 L78.8 139.5 L81.3 139.4 L83.9 139.5 L86.4 139.9 L88.9 140.5 L91.4 141.3 L94.0 142.2 L96.5 143.2 L99.0 144.2 L101.6 145.2 L104.1 146.0 L106.6 146.7 L109.1 147.2 L111.7 147.4 L114.2 147.3 L116.7 147.1 L119.2 146.5 L121.8 145.8 L124.3 144.9 L126.8 143.9 L129.4 142.9 L131.9 141.9 L134.4 141.1 L136.9 140.3 L139.5 139.8 L142.0 139.5" fill="none" stroke="#b4a724" stroke-width="9.5" stroke-dasharray="0.5 2.7" opacity=".6"/><path d="M53.0 168.3 L55.4 167.3 L57.8 166.4 L60.2 165.5 L62.6 164.5 L64.9 163.4 L67.3 162.3 L69.7 161.3 L72.1 160.3 L74.5 159.5 L76.9 158.9 L79.3 158.4 L81.7 158.2 L84.1 158.2 L86.4 158.4 L88.8 158.8 L91.2 159.4 L93.6 160.1 L96.0 160.9 L98.4 161.7 L100.8 162.5 L103.2 163.2 L105.6 163.9 L107.9 164.3 L110.3 164.6 L112.7 164.7 L115.1 164.6 L117.5 164.3 L119.9 164.0 L122.3 163.5 L124.7 162.9 L127.1 162.4 L129.4 161.9 L131.8 161.5 L134.2 161.3 L136.6 161.4 L139.0 162.0 L139.0 162.4 L136.6 163.4 L134.2 164.3 L131.8 165.3 L129.4 166.4 L127.1 167.5 L124.7 168.5 L122.3 169.6 L119.9 170.5 L117.5 171.3 L115.1 171.8 L112.7 172.2 L110.3 172.4 L107.9 172.3 L105.6 172.0 L103.2 171.6 L100.8 171.0 L98.4 170.2 L96.0 169.4 L93.6 168.6 L91.2 167.8 L88.8 167.2 L86.4 166.6 L84.1 166.2 L81.7 166.0 L79.3 166.0 L76.9 166.1 L74.5 166.4 L72.1 166.9 L69.7 167.4 L67.3 167.9 L64.9 168.5 L62.6 168.9 L60.2 169.3 L57.8 169.4 L55.4 169.3 L53.0 168.7 Z" fill="#5e5f62" filter="url(#b1)" opacity=".75"/><path d="M49.0 191.6 L51.6 191.3 L54.2 190.5 L56.8 189.5 L59.4 188.2 L62.1 186.9 L64.7 185.4 L67.3 184.0 L69.9 182.8 L72.5 181.6 L75.1 180.7 L77.7 180.1 L80.3 179.8 L82.9 179.8 L85.6 180.2 L88.2 180.8 L90.8 181.6 L93.4 182.6 L96.0 183.8 L98.6 184.9 L101.2 186.1 L103.8 187.1 L106.4 188.0 L109.1 188.6 L111.7 189.0 L114.3 189.1 L116.9 189.0 L119.5 188.6 L122.1 188.0 L124.7 187.2 L127.3 186.3 L129.9 185.4 L132.6 184.5 L135.2 183.8 L137.8 183.2 L140.4 182.8 L143.0 182.5 L143.0 182.9 L140.4 183.3 L137.8 184.1 L135.2 185.2 L132.6 186.5 L129.9 187.9 L127.3 189.3 L124.7 190.7 L122.1 192.0 L119.5 193.0 L116.9 193.8 L114.3 194.3 L111.7 194.6 L109.1 194.4 L106.4 194.0 L103.8 193.4 L101.2 192.5 L98.6 191.4 L96.0 190.3 L93.4 189.1 L90.8 188.0 L88.2 187.0 L85.6 186.2 L82.9 185.7 L80.3 185.4 L77.7 185.4 L75.1 185.6 L72.5 186.1 L69.9 186.8 L67.3 187.6 L64.7 188.5 L62.1 189.4 L59.4 190.2 L56.8 190.9 L54.2 191.4 L51.6 191.7 L49.0 192.0 Z" fill="#060606"/><path d="M56.0 212.9 L58.0 211.8 L60.1 210.8 L62.1 209.7 L64.1 208.5 L66.1 207.2 L68.2 205.9 L70.2 204.7 L72.2 203.5 L74.2 202.5 L76.3 201.8 L78.3 201.2 L80.3 201.0 L82.4 201.0 L84.4 201.3 L86.4 201.8 L88.4 202.6 L90.5 203.4 L92.5 204.4 L94.5 205.5 L96.6 206.4 L98.6 207.3 L100.6 208.1 L102.6 208.6 L104.7 209.0 L106.7 209.1 L108.7 208.9 L110.8 208.6 L112.8 208.0 L114.8 207.4 L116.8 206.7 L118.9 205.9 L120.9 205.3 L122.9 204.8 L124.9 204.4 L127.0 204.4 L129.0 205.0 L129.0 205.4 L127.0 206.5 L124.9 207.6 L122.9 208.8 L120.9 210.0 L118.9 211.3 L116.8 212.6 L114.8 213.8 L112.8 215.0 L110.8 215.9 L108.7 216.6 L106.7 217.0 L104.7 217.2 L102.6 217.1 L100.6 216.7 L98.6 216.1 L96.6 215.4 L94.5 214.4 L92.5 213.4 L90.5 212.4 L88.4 211.5 L86.4 210.6 L84.4 210.0 L82.4 209.5 L80.3 209.2 L78.3 209.2 L76.3 209.4 L74.2 209.8 L72.2 210.4 L70.2 211.1 L68.2 211.9 L66.1 212.6 L64.1 213.2 L62.1 213.7 L60.1 214.0 L58.0 213.9 L56.0 213.3 Z" fill="#222" filter="url(#b1)" opacity=".75"/><path d="M60.0 212.9 L61.8 211.9 L63.6 211.0 L65.4 209.9 L67.2 208.8 L69.0 207.5 L70.8 206.2 L72.6 205.0 L74.4 203.9 L76.2 202.9 L78.1 202.2 L79.9 201.7 L81.7 201.4 L83.5 201.5 L85.3 201.8 L87.1 202.3 L88.9 203.0 L90.7 203.9 L92.5 204.9 L94.3 206.0 L96.1 206.9 L97.9 207.8 L99.7 208.6 L101.5 209.1 L103.3 209.4 L105.1 209.5 L106.9 209.3 L108.8 209.0 L110.6 208.4 L112.4 207.8 L114.2 207.0 L116.0 206.2 L117.8 205.5 L119.6 205.0 L121.4 204.6 L123.2 204.6 L125.0 205.0 L125.0 205.4 L123.2 206.4 L121.4 207.4 L119.6 208.5 L117.8 209.7 L116.0 211.0 L114.2 212.3 L112.4 213.5 L110.6 214.6 L108.8 215.5 L106.9 216.2 L105.1 216.6 L103.3 216.8 L101.5 216.6 L99.7 216.3 L97.9 215.7 L96.1 214.9 L94.3 213.9 L92.5 212.9 L90.7 211.9 L88.9 211.0 L87.1 210.1 L85.3 209.5 L83.5 209.0 L81.7 208.8 L79.9 208.8 L78.1 209.0 L76.2 209.4 L74.4 210.0 L72.6 210.8 L70.8 211.5 L69.0 212.3 L67.2 213.0 L65.4 213.5 L63.6 213.8 L61.8 213.8 L60.0 213.3 Z" fill="#111" filter="url(#spk)" opacity=".8"/><path d="M60.0 234.4 L62.0 234.0 L63.9 233.3 L65.9 232.5 L67.9 231.4 L69.9 230.3 L71.8 229.2 L73.8 228.1 L75.8 227.1 L77.8 226.2 L79.7 225.5 L81.7 225.0 L83.7 224.8 L85.6 224.8 L87.6 225.0 L89.6 225.5 L91.6 226.2 L93.5 227.0 L95.5 227.9 L97.5 228.8 L99.4 229.7 L101.4 230.5 L103.4 231.1 L105.4 231.6 L107.3 232.0 L109.3 232.0 L111.3 231.9 L113.2 231.6 L115.2 231.1 L117.2 230.5 L119.2 229.9 L121.1 229.2 L123.1 228.5 L125.1 228.0 L127.1 227.6 L129.0 227.4 L131.0 227.3 L131.0 227.7 L129.0 228.1 L127.1 228.8 L125.1 229.8 L123.1 230.8 L121.1 232.0 L119.2 233.1 L117.2 234.2 L115.2 235.2 L113.2 236.0 L111.3 236.6 L109.3 237.1 L107.3 237.2 L105.4 237.1 L103.4 236.8 L101.4 236.3 L99.4 235.6 L97.5 234.7 L95.5 233.9 L93.5 232.9 L91.6 232.1 L89.6 231.3 L87.6 230.7 L85.6 230.3 L83.7 230.0 L81.7 230.0 L79.7 230.2 L77.8 230.6 L75.8 231.1 L73.8 231.7 L71.8 232.4 L69.9 233.1 L67.9 233.7 L65.9 234.2 L63.9 234.6 L62.0 234.7 L60.0 234.8 Z" fill="#1c1c1c" filter="url(#b1)" opacity=".95"/><path d="M52.0 256.7 L54.5 255.0 L56.9 253.9 L59.4 252.7 L61.9 251.4 L64.4 250.1 L66.8 248.8 L69.3 247.5 L71.8 246.4 L74.2 245.4 L76.7 244.6 L79.2 244.0 L81.7 243.8 L84.1 243.8 L86.6 244.1 L89.1 244.6 L91.6 245.4 L94.0 246.2 L96.5 247.2 L99.0 248.3 L101.4 249.2 L103.9 250.1 L106.4 250.9 L108.9 251.4 L111.3 251.8 L113.8 251.9 L116.3 251.7 L118.8 251.4 L121.2 250.9 L123.7 250.3 L126.2 249.6 L128.6 248.9 L131.1 248.2 L133.6 247.8 L136.1 247.5 L138.5 247.7 L141.0 248.8 L141.0 249.2 L138.5 250.9 L136.1 252.1 L133.6 253.4 L131.1 254.7 L128.6 256.0 L126.2 257.3 L123.7 258.6 L121.2 259.7 L118.8 260.7 L116.3 261.4 L113.8 261.8 L111.3 262.0 L108.9 261.9 L106.4 261.5 L103.9 260.9 L101.4 260.2 L99.0 259.2 L96.5 258.2 L94.0 257.2 L91.6 256.3 L89.1 255.4 L86.6 254.7 L84.1 254.3 L81.7 254.0 L79.2 254.0 L76.7 254.2 L74.2 254.6 L71.8 255.2 L69.3 255.9 L66.8 256.6 L64.4 257.3 L61.9 257.9 L59.4 258.3 L56.9 258.5 L54.5 258.3 L52.0 257.1 Z" fill="#050505" filter="url(#rough)"/><path d="M50.0 279.1 L52.6 278.7 L55.2 277.9 L57.8 276.9 L60.3 275.7 L62.9 274.4 L65.5 273.1 L68.1 271.8 L70.7 270.6 L73.2 269.5 L75.8 268.7 L78.4 268.1 L81.0 267.9 L83.6 267.9 L86.2 268.3 L88.8 268.9 L91.3 269.7 L93.9 270.7 L96.5 271.9 L99.1 273.0 L101.7 274.1 L104.2 275.1 L106.8 275.9 L109.4 276.5 L112.0 276.9 L114.6 276.9 L117.2 276.7 L119.8 276.3 L122.3 275.7 L124.9 274.8 L127.5 273.9 L130.1 273.0 L132.7 272.1 L135.2 271.3 L137.8 270.8 L140.4 270.4 L143.0 270.2 L143.0 270.6 L140.4 271.0 L137.8 271.9 L135.2 273.0 L132.7 274.2 L130.1 275.5 L127.5 276.9 L124.9 278.2 L122.3 279.3 L119.8 280.3 L117.2 281.1 L114.6 281.5 L112.0 281.7 L109.4 281.6 L106.8 281.1 L104.2 280.4 L101.7 279.5 L99.1 278.5 L96.5 277.4 L93.9 276.2 L91.3 275.2 L88.8 274.2 L86.2 273.5 L83.6 273.0 L81.0 272.7 L78.4 272.7 L75.8 273.0 L73.2 273.5 L70.7 274.3 L68.1 275.1 L65.5 276.0 L62.9 277.0 L60.3 277.8 L57.8 278.5 L55.2 279.1 L52.6 279.3 L50.0 279.5 Z" fill="#12303f" filter="url(#b1)" opacity=".9"/><path d="M52.0 300.5 L54.5 299.7 L56.9 298.7 L59.4 297.7 L61.9 296.5 L64.4 295.2 L66.8 293.9 L69.3 292.6 L71.8 291.5 L74.2 290.5 L76.7 289.7 L79.2 289.1 L81.7 288.9 L84.1 288.9 L86.6 289.1 L89.1 289.7 L91.6 290.4 L94.0 291.3 L96.5 292.3 L99.0 293.3 L101.4 294.3 L103.9 295.2 L106.4 295.9 L108.9 296.5 L111.3 296.8 L113.8 296.9 L116.3 296.8 L118.8 296.5 L121.2 296.0 L123.7 295.3 L126.2 294.6 L128.6 293.9 L131.1 293.2 L133.6 292.7 L136.1 292.4 L138.5 292.3 L141.0 292.6 L141.0 293.0 L138.5 293.8 L136.1 294.9 L133.6 296.0 L131.1 297.3 L128.6 298.6 L126.2 299.9 L123.7 301.1 L121.2 302.2 L118.8 303.2 L116.3 303.9 L113.8 304.3 L111.3 304.5 L108.9 304.4 L106.4 304.1 L103.9 303.5 L101.4 302.7 L99.0 301.8 L96.5 300.8 L94.0 299.8 L91.6 298.8 L89.1 298.0 L86.6 297.3 L84.1 296.8 L81.7 296.5 L79.2 296.5 L76.7 296.7 L74.2 297.1 L71.8 297.7 L69.3 298.4 L66.8 299.1 L64.4 299.8 L61.9 300.5 L59.4 301.0 L56.9 301.2 L54.5 301.2 L52.0 300.9 Z" fill="#0a0a0a" filter="url(#b05)"/><path d="M52.0 322.4 L54.5 321.5 L56.9 320.6 L59.4 319.5 L61.9 318.2 L64.4 316.9 L66.8 315.6 L69.3 314.3 L71.8 313.2 L74.2 312.2 L76.7 311.4 L79.2 310.8 L81.7 310.5 L84.1 310.5 L86.6 310.8 L89.1 311.3 L91.6 312.1 L94.0 312.9 L96.5 313.9 L99.0 315.0 L101.4 315.9 L103.9 316.8 L106.4 317.6 L108.9 318.2 L111.3 318.5 L113.8 318.6 L116.3 318.5 L118.8 318.2 L121.2 317.7 L123.7 317.1 L126.2 316.4 L128.6 315.7 L131.1 315.0 L133.6 314.5 L136.1 314.2 L138.5 314.2 L141.0 314.5 L141.0 314.9 L138.5 315.8 L136.1 316.8 L133.6 318.0 L131.1 319.3 L128.6 320.6 L126.2 321.9 L123.7 323.2 L121.2 324.3 L118.8 325.3 L116.3 326.0 L113.8 326.5 L111.3 326.7 L108.9 326.6 L106.4 326.2 L103.9 325.6 L101.4 324.9 L99.0 323.9 L96.5 322.9 L94.0 321.9 L91.6 321.0 L89.1 320.1 L86.6 319.4 L84.1 318.9 L81.7 318.7 L79.2 318.6 L76.7 318.8 L74.2 319.2 L71.8 319.8 L69.3 320.4 L66.8 321.2 L64.4 321.9 L61.9 322.5 L59.4 323.0 L56.9 323.2 L54.5 323.2 L52.0 322.8 Z" fill="#080808" filter="url(#b05)"/><path d="M52.0 344.3 L54.5 342.6 L56.9 341.5 L59.4 340.3 L61.9 339.0 L64.4 337.7 L66.8 336.4 L69.3 335.1 L71.8 334.0 L74.2 333.0 L76.7 332.2 L79.2 331.6 L81.7 331.4 L84.1 331.4 L86.6 331.7 L89.1 332.2 L91.6 333.0 L94.0 333.8 L96.5 334.8 L99.0 335.9 L101.4 336.8 L103.9 337.7 L106.4 338.5 L108.9 339.0 L111.3 339.4 L113.8 339.5 L116.3 339.3 L118.8 339.0 L121.2 338.5 L123.7 337.9 L126.2 337.2 L128.6 336.5 L131.1 335.8 L133.6 335.4 L136.1 335.1 L138.5 335.3 L141.0 336.4 L141.0 336.8 L138.5 338.5 L136.1 339.7 L133.6 341.0 L131.1 342.3 L128.6 343.6 L126.2 344.9 L123.7 346.2 L121.2 347.3 L118.8 348.3 L116.3 349.0 L113.8 349.4 L111.3 349.6 L108.9 349.5 L106.4 349.1 L103.9 348.5 L101.4 347.8 L99.0 346.8 L96.5 345.8 L94.0 344.8 L91.6 343.9 L89.1 343.0 L86.6 342.3 L84.1 341.9 L81.7 341.6 L79.2 341.6 L76.7 341.8 L74.2 342.2 L71.8 342.8 L69.3 343.5 L66.8 344.2 L64.4 344.9 L61.9 345.5 L59.4 345.9 L56.9 346.1 L54.5 345.9 L52.0 344.7 Z" fill="#0a0a0a" filter="url(#rough)"/><path d="M52.0 366.2 L54.5 364.8 L56.9 363.8 L59.4 362.7 L61.9 361.5 L64.4 360.3 L66.8 359.0 L69.3 357.8 L71.8 356.7 L74.2 355.7 L76.7 355.0 L79.2 354.4 L81.7 354.2 L84.1 354.3 L86.6 354.6 L89.1 355.1 L91.6 355.8 L94.0 356.7 L96.5 357.7 L99.0 358.8 L101.4 359.7 L103.9 360.6 L106.4 361.3 L108.9 361.9 L111.3 362.2 L113.8 362.3 L116.3 362.1 L118.8 361.7 L121.2 361.2 L123.7 360.5 L126.2 359.8 L128.6 359.0 L131.1 358.3 L133.6 357.8 L136.1 357.4 L138.5 357.4 L141.0 358.3 L141.0 358.7 L138.5 360.1 L136.1 361.2 L133.6 362.3 L131.1 363.6 L128.6 364.9 L126.2 366.1 L123.7 367.3 L121.2 368.4 L118.8 369.3 L116.3 370.0 L113.8 370.4 L111.3 370.6 L108.9 370.5 L106.4 370.1 L103.9 369.5 L101.4 368.7 L99.0 367.7 L96.5 366.7 L94.0 365.7 L91.6 364.8 L89.1 363.9 L86.6 363.3 L84.1 362.8 L81.7 362.6 L79.2 362.6 L76.7 362.8 L74.2 363.3 L71.8 363.9 L69.3 364.6 L66.8 365.4 L64.4 366.1 L61.9 366.8 L59.4 367.3 L56.9 367.6 L54.5 367.5 L52.0 366.6 Z" fill="#1a1a1a" filter="url(#spk)"/></svg></div>
<div style="left:222px;top:110px;width:10px;height:258px;background:#6a6b6f;border:1px solid #55565a"></div>
<div style="left:222px;top:110px;width:10px;height:10px;background:#7b7c80;border:1px solid #55565a"><svg style="left:2px;top:3px;" width="5" height="3" viewBox="0 0 5 3"><path d="M0 3 L5 3 L2.5 0 Z" fill="#3a3b3d"/></svg></div>
<div style="left:222px;top:358px;width:10px;height:10px;background:#7b7c80;border:1px solid #55565a"><svg style="left:2px;top:3px;" width="5" height="3" viewBox="0 0 5 3"><path d="M0 0 L5 0 L2.5 3 Z" fill="#3a3b3d"/></svg></div>
<div style="left:222px;top:160px;width:10px;height:37px;background:linear-gradient(90deg,#8e8f93,#7c7d81);border:1px solid #55565a"><svg style="left:2px;top:15px;" width="5" height="5" viewBox="0 0 5 5"><path d="M0 0.5h5M0 2.5h5M0 4.5h5" stroke="#55565a" stroke-width="1"/></svg></div>
<div style="left:37px;top:369px;width:196px;height:21px;background:#6f7074"></div>
<svg style="left:181px;top:371px;" width="14" height="16" viewBox="0 0 14 16"><rect x="1" y="7" width="7" height="8" fill="#d9d9d9" stroke="#555" stroke-width="0.7"/><rect x="6" y="9" width="7" height="6" fill="#bbb" stroke="#555" stroke-width="0.7"/><rect x="3.5" y="2" width="3" height="5" fill="#ccc" stroke="#555" stroke-width="0.7"/></svg>
<svg style="left:199px;top:370px;" width="14" height="17" viewBox="0 0 14 17"><path d="M0.5 0.5 L13.5 0.5 L13.5 12 L9 16.5 L0.5 16.5 Z" fill="#fdfdfd" stroke="#888" stroke-width="0.6"/><path d="M13.5 12 L9 12 L9 16.5" fill="#d0d0d0"/></svg>
<svg style="left:217px;top:370px;" width="15" height="17" viewBox="0 0 15 17"><path d="M2 5 L13 5 L12 16 L3 16 Z" fill="#f6f6f6" stroke="#666" stroke-width="0.6"/><ellipse cx="7.5" cy="4.5" rx="6.5" ry="2.2" fill="#eee" stroke="#555" stroke-width="0.8"/><path d="M5 1.5 h5" stroke="#555" stroke-width="1.2"/><path d="M5.5 7.5v7M7.5 7.5v7M9.5 7.5v7" stroke="#888" stroke-width="0.8"/></svg>
<div class="dk" style="left:37px;top:390px;width:197px;height:15px;"></div>
<div class="mb" style="left:38px;top:391px;width:15px;height:14px;"><svg style="left:0px;top:0px;" width="15" height="15" viewBox="0 0 15 15"><path d="M3 4.5 L6 7.5 L3 10.5 Z" fill="#a3a4a7"/><path d="M7 5h5M7 7.5h5M7 10h5" stroke="#a3a4a7" stroke-width="1"/></svg></div>
<div class="tab" style="left:55px;top:391px;width:119px;height:14px;"></div>
<svg style="left:59px;top:392px;" width="7" height="15" viewBox="0 0 7 15"><path d="M3.5 0 L5 4 L5 11 L2 11 L2 4 Z" fill="#ddd" stroke="#333" stroke-width="0.8"/><rect x="0.5" y="12" width="6" height="2.5" fill="#111"/></svg>
<svg style="left:66px;top:391px;" width="9" height="9" viewBox="0 0 9 9"><rect x="3.3" y="-0.3" width="1.6" height="8.8" fill="#222" transform="rotate(0 4.1 4.1)"/><rect x="3.3" y="-0.3" width="1.6" height="8.8" fill="#222" transform="rotate(45 4.1 4.1)"/><rect x="3.3" y="-0.3" width="1.6" height="8.8" fill="#222" transform="rotate(90 4.1 4.1)"/><rect x="3.3" y="-0.3" width="1.6" height="8.8" fill="#222" transform="rotate(135 4.1 4.1)"/><circle cx="4.1" cy="4.1" r="3" fill="#222"/><circle cx="4.1" cy="4.1" r="1.2" fill="#aaa"/></svg>
<span class="t" style="left:78.0px;top:394px;font-size:10.5px;transform:scaleX(0.8410);transform-origin:0 0;color:#e6e6e6">Tool property [Magda's]</span>
<div style="left:38px;top:410px;width:194px;height:35px;background:#808185;border:1px solid #5d5e61"></div>
<div style="left:38px;top:410px;width:97px;height:35px;background:#b9b9b9"></div>
<svg style="left:38px;top:410px;" width="194" height="35" viewBox="0 0 194 35"><defs><filter id="pb"><feGaussianBlur stdDeviation="1.1"/></filter><linearGradient id="pg" x1="0" x2="1"><stop offset="0" stop-color="#7b2a1f" stop-opacity="0"/><stop offset=".25" stop-color="#7b2a1f" stop-opacity=".5"/><stop offset=".5" stop-color="#6a1a10"/><stop offset=".8" stop-color="#7b2a1f" stop-opacity=".5"/><stop offset="1" stop-color="#7b2a1f" stop-opacity="0"/></linearGradient></defs><path d="M30 20 C60 6 80 8 98 17 C118 27 138 26 166 17 C140 30 118 31 97 20.500 C78 11 60 10 30 20 Z" fill="url(#pg)" filter="url(#pb)" opacity=".85"/></svg>
<div style="left:38px;top:411px;width:42px;height:14px;background:rgba(140,141,145,.75)"></div>
<span class="t" style="left:39.0px;top:412px;font-size:11px;transform:scaleX(0.9216);transform-origin:0 0;color:#f2f2f2">Magda's</span>
<svg style="left:214px;top:426px;" width="18" height="18" viewBox="0 0 18 18"><path d="M10 10 L16.500 16.500" stroke="#3a3b3d" stroke-width="4.600" stroke-linecap="round"/><path d="M10 10 L16.500 16.500" stroke="#f4f4f4" stroke-width="3" stroke-linecap="round"/><circle cx="6.500" cy="6.500" r="5.200" fill="#f4f4f4" stroke="#3a3b3d" stroke-width="0.800"/><circle cx="6.500" cy="6.500" r="2.400" fill="#808185" stroke="#55565a" stroke-width="0.600"/><path d="M6.500 6.500 L1 3" stroke="#808185" stroke-width="2.600"/></svg>
<div style="left:38px;top:447px;width:184px;height:125px;background:#77787c;border:1px solid #5d5e61;overflow:hidden"></div>
<span class="t" style="left:52.0px;top:450px;font-size:10.5px;transform:scaleX(0.8863);transform-origin:0 0;">Brush Size</span>
<div style="left:72px;top:462px;width:80px;height:7px;border-bottom:1px solid #4e4f52"></div>
<div style="left:72px;top:462px;width:36px;height:7px;background:linear-gradient(90deg,#77787c,#c4c5c9);border:1px solid #55565a"></div>
<span class="t" style="left:180.5px;top:455px;font-size:10.5px;transform:scaleX(0.9250);transform-origin:0 0;">8.7</span>
<svg style="left:196px;top:454px;" width="7" height="13" viewBox="0 0 7 13"><path d="M0.500 5 L6.500 5 L3.500 0.500 Z M0.500 8 L6.500 8 L3.500 12.500 Z" fill="#2d2e30"/></svg>
<div class="btn" style="left:206px;top:449px;width:14px;height:20px;"><svg style="left:2px;top:4px;" width="10" height="11" viewBox="0 0 10 11"><circle cx="5" cy="5" r="4.6" fill="#eee"/><path d="M5 2 L5 7 M2.5 5 L5 8 L7.5 5" stroke="#333" stroke-width="1.4" fill="none"/><path d="M1 9.5 h8" stroke="#eee" stroke-width="1.6"/></svg></div>
<div style="left:44px;top:470px;width:176px;height:1px;background:#6c6d71"></div>
<span class="t" style="left:52.0px;top:475px;font-size:10.5px;transform:scaleX(0.9111);transform-origin:0 0;">Amount of paint</span>
<div style="left:72px;top:487px;width:80px;height:7px;background:linear-gradient(90deg,#77787c,#c4c5c9);border:1px solid #55565a"></div>
<span class="t" style="left:179.0px;top:480px;font-size:10.5px;transform:scaleX(0.8563);transform-origin:0 0;">100</span>
<svg style="left:196px;top:479px;" width="7" height="13" viewBox="0 0 7 13"><path d="M0.500 5 L6.500 5 L3.500 0.500 Z M0.500 8 L6.500 8 L3.500 12.500 Z" fill="#2d2e30"/></svg>
<div class="btn" style="left:206px;top:474px;width:14px;height:20px;"><svg style="left:2px;top:4px;" width="10" height="11" viewBox="0 0 10 11"><circle cx="5" cy="5" r="4.6" fill="#eee"/><path d="M5 2 L5 7 M2.5 5 L5 8 L7.5 5" stroke="#333" stroke-width="1.4" fill="none"/><path d="M1 9.5 h8" stroke="#eee" stroke-width="1.6"/></svg></div>
<div style="left:44px;top:495px;width:176px;height:1px;background:#6c6d71"></div>
<span class="t" style="left:52.0px;top:500px;font-size:10.5px;transform:scaleX(0.9258);transform-origin:0 0;">Density of paint</span>
<div style="left:72px;top:512px;width:80px;height:7px;background:linear-gradient(90deg,#77787c,#c4c5c9);border:1px solid #55565a"></div>
<span class="t" style="left:179.0px;top:505px;font-size:10.5px;transform:scaleX(0.8563);transform-origin:0 0;">100</span>
<svg style="left:196px;top:504px;" width="7" height="13" viewBox="0 0 7 13"><path d="M0.500 5 L6.500 5 L3.500 0.500 Z M0.500 8 L6.500 8 L3.500 12.500 Z" fill="#2d2e30"/></svg>
<div class="btn" style="left:206px;top:499px;width:14px;height:20px;"><svg style="left:2px;top:4px;" width="10" height="11" viewBox="0 0 10 11"><circle cx="5" cy="5" r="4.6" fill="#eee"/><path d="M5 2 L5 7 M2.5 5 L5 8 L7.5 5" stroke="#333" stroke-width="1.4" fill="none"/><path d="M1 9.5 h8" stroke="#eee" stroke-width="1.6"/></svg></div>
<div style="left:44px;top:520px;width:176px;height:1px;background:#6c6d71"></div>
<span class="t" style="left:52.0px;top:524px;font-size:10.5px;transform:scaleX(0.9073);transform-origin:0 0;">Color stretch</span>
<div style="left:72px;top:536px;width:80px;height:7px;background:linear-gradient(90deg,#77787c,#c4c5c9);border:1px solid #55565a"></div>
<span class="t" style="left:179.0px;top:529px;font-size:10.5px;transform:scaleX(0.8563);transform-origin:0 0;">100</span>
<svg style="left:196px;top:528px;" width="7" height="13" viewBox="0 0 7 13"><path d="M0.500 5 L6.500 5 L3.500 0.500 Z M0.500 8 L6.500 8 L3.500 12.500 Z" fill="#2d2e30"/></svg>
<div style="left:44px;top:546px;width:176px;height:1px;background:#6c6d71"></div>
<span class="t" style="left:52.0px;top:551px;font-size:10.5px;transform:scaleX(0.9347);transform-origin:0 0;">Hardness</span>
<div style="left:96px;top:548px;width:21px;height:16px;background:#98999c;border:1px solid #5b5c5f"></div>
<div style="left:118px;top:548px;width:21px;height:16px;background:#a3a4a7;border:1px solid #5b5c5f"></div>
<div style="left:140px;top:548px;width:21px;height:16px;background:#aeafb2;border:1px solid #5b5c5f"></div>
<div style="left:161px;top:548px;width:21px;height:16px;background:#b9babd;border:1px solid #5b5c5f"></div>
<div style="left:183px;top:548px;width:21px;height:16px;background:#c4c5c8;border:1px solid #5b5c5f"></div>
<div class="btn" style="left:206px;top:548px;width:14px;height:16px;"><svg style="left:4px;top:4px;" width="5" height="7" viewBox="0 0 5 7"><path d="M0 0 L5 3.5 L0 7 Z" fill="#2d2e30"/></svg></div>
<div style="left:44px;top:567px;width:176px;height:1px;background:#6c6d71"></div>
<div style="left:222px;top:447px;width:10px;height:125px;background:#6a6b6f;border:1px solid #55565a"></div>
<div style="left:222px;top:447px;width:10px;height:11px;background:#7b7c80;border:1px solid #55565a"><svg style="left:2px;top:3px;" width="5" height="3" viewBox="0 0 5 3"><path d="M0 3 L5 3 L2.5 0 Z" fill="#3a3b3d"/></svg></div>
<div style="left:222px;top:561px;width:10px;height:11px;background:#7b7c80;border:1px solid #55565a"><svg style="left:2px;top:4px;" width="5" height="3" viewBox="0 0 5 3"><path d="M0 0 L5 0 L2.5 3 Z" fill="#3a3b3d"/></svg></div>
<div style="left:222px;top:458px;width:10px;height:75px;background:linear-gradient(90deg,#8e8f93,#7c7d81);border:1px solid #55565a"><svg style="left:2px;top:34px;" width="5" height="5" viewBox="0 0 5 5"><path d="M0 0.5h5M0 2.5h5M0 4.5h5" stroke="#55565a" stroke-width="1"/></svg></div>
<div style="left:37px;top:573px;width:196px;height:20px;background:#6f7074"></div>
<svg style="left:196px;top:573px;" width="18" height="18" viewBox="0 0 18 18"><path d="M9 0.800 L12.600 4.200 L7.600 4.600 Z" fill="#2f3032" transform="rotate(0 9 9)"/><path d="M9 0.800 L12.600 4.200 L7.600 4.600 Z" fill="#2f3032" transform="rotate(45 9 9)"/><path d="M9 0.800 L12.600 4.200 L7.600 4.600 Z" fill="#2f3032" transform="rotate(90 9 9)"/><path d="M9 0.800 L12.600 4.200 L7.600 4.600 Z" fill="#2f3032" transform="rotate(135 9 9)"/><path d="M9 0.800 L12.600 4.200 L7.600 4.600 Z" fill="#2f3032" transform="rotate(180 9 9)"/><path d="M9 0.800 L12.600 4.200 L7.600 4.600 Z" fill="#2f3032" transform="rotate(225 9 9)"/><path d="M9 0.800 L12.600 4.200 L7.600 4.600 Z" fill="#2f3032" transform="rotate(270 9 9)"/><path d="M9 0.800 L12.600 4.200 L7.600 4.600 Z" fill="#2f3032" transform="rotate(315 9 9)"/></svg>
<svg style="left:215px;top:573px;" width="18" height="18" viewBox="0 0 18 18"><path d="M5 1 L5 6 L7.5 8 L7.5 17 L11 17 L11 8 L13.5 6 L13.5 1 L11 1 L11 5 L7.5 5 L7.5 1 Z" fill="#f0f0f0" stroke="#555" stroke-width="0.7"/></svg>
<div class="dk" style="left:37px;top:593px;width:197px;height:15px;"></div>
<div class="mb" style="left:38px;top:594px;width:15px;height:14px;"><svg style="left:0px;top:0px;" width="15" height="15" viewBox="0 0 15 15"><path d="M3 4.5 L6 7.5 L3 10.5 Z" fill="#a3a4a7"/><path d="M7 5h5M7 7.5h5M7 10h5" stroke="#a3a4a7" stroke-width="1"/></svg></div>
<div class="tab" style="left:55px;top:594px;width:50px;height:14px;"></div>
<div style="left:59px;top:594px;width:15px;height:15px;border-radius:50%;background:conic-gradient(#f00,#ff0,#0f0,#0ff,#00f,#f0f,#f00);border:1px solid #eee"><div style="left:3px;top:3px;width:7px;height:7px;border-radius:50%;background:#8a4a40;border:1px solid #ddd"></div></div>
<span class="t" style="left:78.0px;top:597px;font-size:10.5px;transform:scaleX(0.8768);transform-origin:0 0;color:#dedede;-webkit-mask-image:linear-gradient(90deg,#000 60%,transparent 100%)">Color</span>
<div class="itab" style="left:106px;top:594px;width:24px;height:14px;"><svg style="left:0px;top:0px;" width="24" height="15" viewBox="0 0 24 15"><defs><linearGradient id="cg1" x1="0" x2="1"><stop offset="0" stop-color="#a4a5a8"/><stop offset="1" stop-color="#5e5f62"/></linearGradient></defs><rect x="4" y="2" width="15" height="3" fill="url(#cg1)"/><rect x="4" y="6.500" width="15" height="3" fill="url(#cg1)"/><rect x="4" y="11" width="15" height="3" fill="url(#cg1)"/></svg></div>
<div class="itab" style="left:132px;top:594px;width:24px;height:14px;"><svg style="left:0px;top:0px;" width="24" height="15" viewBox="0 0 24 15"><rect x="5" y="1" width="4" height="4" fill="#5e5f62"/><rect x="10" y="1" width="4" height="3" fill="#4a4b4e"/><rect x="15" y="1" width="4" height="4" fill="#8e8f93"/><rect x="5" y="6" width="4" height="4" fill="#55565a"/><rect x="10" y="5" width="6" height="6" fill="#9a9b9f" stroke="#3a3b3d" stroke-width="0.8"/><rect x="12" y="7" width="2" height="2" fill="#444"/><rect x="16" y="6" width="3" height="5" fill="#a4a5a8"/><rect x="5" y="11" width="4" height="3" fill="#77787c"/><rect x="15" y="12" width="4" height="2" fill="#3a3b3d"/></svg></div>
<div class="itab" style="left:158px;top:594px;width:23px;height:14px;"><svg style="left:0px;top:0px;" width="24" height="15" viewBox="0 0 24 15"><rect x="5" y="1" width="4" height="5" fill="#8e8f93"/><rect x="10" y="1" width="4" height="3" fill="#85868a"/><rect x="15" y="1" width="4" height="6" fill="#808185"/><rect x="5" y="8" width="4" height="4" fill="#8a8b8f"/><rect x="10" y="6" width="4" height="5" fill="#86878b"/><rect x="14" y="10" width="5" height="3" fill="#b4b5b8"/><rect x="9" y="11" width="4" height="3" fill="#8e8f93"/></svg></div>
<div class="itab" style="left:183px;top:594px;width:24px;height:14px;"><svg style="left:0px;top:0px;" width="24" height="15" viewBox="0 0 24 15"><path d="M4 14 L6 6 L8 14 Z" fill="#a4a5a8"/><path d="M8 2 L19 1 L19 4 Z" fill="#a9aaad"/><defs><linearGradient id="cg2" x1="0" y1="0" x2="0" y2="1"><stop offset="0" stop-color="#9a9b9f"/><stop offset="1" stop-color="#5e5f62"/></linearGradient></defs><rect x="10" y="6" width="9" height="8" fill="url(#cg2)"/></svg></div>
<div class="itab" style="left:209px;top:594px;width:24px;height:14px;"><svg style="left:0px;top:0px;" width="24" height="15" viewBox="0 0 24 15"><rect x="5" y="2" width="14" height="12" fill="#808185" stroke="#626366" stroke-width="1"/><rect x="7" y="5" width="9" height="9" fill="#8e8f93"/><path d="M5 4.500 h14 M16.500 2 v12" stroke="#626366" stroke-width="1"/></svg></div>
<div style="left:226px;top:612px;width:8px;height:138px;background:#6c6d71"></div>
<div style="left:70px;top:613px;width:123px;height:123px;border-radius:50%;background:conic-gradient(from 0deg,#ffff00,#00ff00 16.67%,#00ffff 33.33%,#0000ff 50%,#ff00ff 66.67%,#ff0000 83.33%,#ffff00);border:1px solid #444"></div>
<div style="left:81px;top:624px;width:101px;height:101px;border-radius:50%;background:#77787c;border:1px solid #444"></div>
<div style="left:100px;top:643px;width:63px;height:63px;background:linear-gradient(to top,#000,rgba(0,0,0,0)),linear-gradient(to right,#fff,#ff3300);border:1px solid #555"></div>
<svg style="left:84px;top:631px;" width="12" height="12" viewBox="0 0 12 12"><rect x="2.5" y="2.5" width="7" height="7" fill="#e8502a" stroke="#222" stroke-width="2.4" transform="rotate(-35 6 6)"/><rect x="2.5" y="2.5" width="7" height="7" fill="#e8502a" stroke="#fff" stroke-width="1.2" transform="rotate(-35 6 6)"/></svg>
<svg style="left:156px;top:680px;" width="10" height="10" viewBox="0 0 10 10"><circle cx="5" cy="5" r="3.5" fill="none" stroke="#222" stroke-width="2.2"/><circle cx="5" cy="5" r="3.5" fill="none" stroke="#fff" stroke-width="1.1"/></svg>
<div style="left:49px;top:715px;width:22px;height:21px;background:#1b1f1e;border:1px solid #2b2f2e"></div>
<div style="left:37px;top:702px;width:22px;height:22px;background:#6b1507;border:1px solid #9ac3dc;box-shadow:inset 0 0 0 1px #fff"></div>
<div style="left:38px;top:738px;width:33px;height:10px;background-color:#fff;background-image:linear-gradient(45deg,#999 25%,transparent 25%,transparent 75%,#999 75%),linear-gradient(45deg,#999 25%,transparent 25%,transparent 75%,#999 75%);background-size:6px 6px;background-position:0 0,3px 3px;border:1px solid #ddd"></div>
<div style="left:114px;top:738px;width:9px;height:9px;background:#14183a;border:1px solid #3a4468"><span class="t" style="left:1px;top:0px;font-size:7px;font-weight:bold;color:#fff">H</span></div>
<div style="left:143px;top:738px;width:9px;height:9px;background:#14183a;border:1px solid #3a4468"><span class="t" style="left:1px;top:0px;font-size:7px;font-weight:bold;color:#fff">S</span></div>
<div style="left:172px;top:738px;width:9px;height:9px;background:#14183a;border:1px solid #3a4468"><span class="t" style="left:1px;top:0px;font-size:7px;font-weight:bold;color:#fff">V</span></div>
<span class="t" style="left:129.0px;top:737px;font-size:10.5px;transform:scaleX(0.8135);transform-origin:0 0;">12</span>
<span class="t" style="left:157.0px;top:737px;font-size:10.5px;transform:scaleX(0.8991);transform-origin:0 0;">97</span>
<span class="t" style="left:186.0px;top:737px;font-size:10.5px;transform:scaleX(0.8991);transform-origin:0 0;">34</span>
<div style="left:206px;top:730px;width:17px;height:17px;border-radius:50%;background:conic-gradient(#f00,#ff0,#0f0,#0ff,#00f,#f0f,#f00)"><div style="left:4px;top:4px;width:9px;height:9px;border-radius:50%;background:#77787c"><svg style="left:2px;top:1.5px;" width="6" height="6" viewBox="0 0 6 6"><path d="M0 0 L6 3 L0 6 Z" fill="#b4471f"/></svg></div></div>
<div style="left:235px;top:87px;width:902px;height:637px;background:#424242"></div>
<div style="left:235px;top:88px;width:1px;height:635px;background:#5a5b5e"></div>
<div style="left:337px;top:209px;width:700px;height:394px;background:#fff;box-shadow:0 0 0 1px #303030"></div>
<svg style="left:0px;top:0px;" width="1400" height="788" viewBox="0 0 1400 788"><defs>
<filter id="wc" x="-30%" y="-30%" width="160%" height="160%"><feGaussianBlur stdDeviation="14" result="b"/><feTurbulence type="fractalNoise" baseFrequency="0.035" numOctaves="3" seed="4" result="n"/><feDisplacementMap in="b" in2="n" scale="38" xChannelSelector="R" yChannelSelector="G"/></filter>
<filter id="wc2" x="-30%" y="-30%" width="160%" height="160%"><feGaussianBlur stdDeviation="9" result="b"/><feTurbulence type="fractalNoise" baseFrequency="0.05" numOctaves="3" seed="11" result="n"/><feDisplacementMap in="b" in2="n" scale="30" xChannelSelector="R" yChannelSelector="G"/></filter>
<clipPath id="cv"><rect x="337" y="209" width="700" height="394"/></clipPath>
</defs><g clip-path="url(#cv)">
<g filter="url(#wc)">
 <ellipse cx="770" cy="328" rx="64" ry="54" fill="#9ab5da" opacity=".72"/>
 <ellipse cx="826" cy="404" rx="48" ry="60" fill="#9ab5da" opacity=".7"/>
 <ellipse cx="800" cy="360" rx="40" ry="40" fill="#9ab5da" opacity=".5"/>
 <ellipse cx="838" cy="268" rx="48" ry="36" fill="#b4c6e2" opacity=".5"/>
 <ellipse cx="728" cy="300" rx="30" ry="36" fill="#b4c6e2" opacity=".45"/>
 <ellipse cx="770" cy="440" rx="40" ry="30" fill="#c3d2e8" opacity=".4"/>
 <ellipse cx="892" cy="320" rx="34" ry="58" fill="#cfb4d0" opacity=".6"/>
 <ellipse cx="880" cy="258" rx="48" ry="30" fill="#dccde2" opacity=".3"/>
 <ellipse cx="968" cy="408" rx="46" ry="62" fill="#e8a0a9" opacity=".7"/>
 <ellipse cx="930" cy="292" rx="42" ry="44" fill="#edb6bf" opacity=".4"/>
 <ellipse cx="1004" cy="345" rx="26" ry="50" fill="#f0c0c6" opacity=".3"/>
 <ellipse cx="990" cy="510" rx="40" ry="62" fill="#efb4bb" opacity=".6"/>
 <ellipse cx="945" cy="480" rx="42" ry="42" fill="#efbcc2" opacity=".4"/>
 <ellipse cx="826" cy="508" rx="46" ry="32" fill="#f0c6cb" opacity=".4"/>
</g>
<g filter="url(#wc2)">
 <ellipse cx="752" cy="335" rx="26" ry="20" fill="#8fadd6" opacity=".4"/>
 <ellipse cx="832" cy="410" rx="22" ry="28" fill="#8fadd6" opacity=".4"/>
 <ellipse cx="972" cy="410" rx="26" ry="32" fill="#e3939d" opacity=".3"/>
</g>

<!-- judge bubble -->
<circle cx="836.5" cy="334" r="31.5" fill="#1e4f9b"/>
<path d="M840 362 C850 366 848 372 856 373 C862 376 868 373 864 370 C858 368 860 362 856 356 Z" fill="#1e4f9b"/>
<ellipse cx="840.5" cy="292" rx="17.5" ry="16.5" fill="#1e4f9b"/>
<path d="M824 292 L824 306 C826 312 834 312 838 308 L838 292 Z" fill="#1e4f9b"/>
<path d="M851 286 C858 288 860 297 858 303 C857 309 852 312 848 311 Z" fill="#1e4f9b"/>
<path d="M838 290 C842 286 850 286 853 290 L853 303 C852 309 847 312 844 312 L845 316 L836 316 L838 308 Z" fill="#fff"/>
<path d="M823.5 293h14M823.5 296.5h14M823.5 300h14" stroke="#fff" stroke-width="1"/>
<circle cx="842.500" cy="297.500" r="0.900" fill="#111"/><circle cx="849.500" cy="296.800" r="0.900" fill="#111"/><path d="M840.500 295 L844 294.300 M847.500 293.800 L851 294.200" stroke="#222" stroke-width="0.700"/><path d="M842 303.500 Q844 301.500 846.500 302.800 Q849 301 851.500 302.500" stroke="#1e4f9b" stroke-width="1.300" fill="none"/><path d="M843.500 306 Q846.500 308.500 849.500 305.500" stroke="#222" stroke-width="0.800" fill="none"/>
<path d="M826 316 C828 312 834 313 837 314 L846 322 L852 314 C858 315 862 320 866 326 L876 328 L877 335 L862 336 L863 343 L826 343 Z" fill="#0a0a0a"/>
<path d="M837 314 L840 330 L848 331 L851 314 Z" fill="#fff"/>
<path d="M839 316 L849 319 L849 316 L839 319 Z" fill="#e9a0a8"/>
<path d="M832 320 C830 330 832 338 834 343" stroke="#ccc" stroke-width="0.6" fill="none"/>
<path d="M876 328 L884 326 L885 333 L877 335 Z" fill="#fff"/>
<path d="M881 330 L888 316" stroke="#1e4f9b" stroke-width="2"/>
<rect x="882.5" y="311.5" width="13" height="7.5" rx="1" fill="#1e4f9b" transform="rotate(27 889 315)"/>
<path d="M824 344.5 H902" stroke="#fff" stroke-width="2.6" stroke-linecap="round"/>
<text x="740" y="336" font-family="Liberation Sans, sans-serif" font-weight="bold" font-size="10.4" fill="#1e4f9b" textLength="56.5" lengthAdjust="spacingAndGlyphs" stroke="#1e4f9b" stroke-width="0.5">ВАШ ДОЛГ</text>
<text x="895" y="336.3" font-family="Liberation Sans, sans-serif" font-weight="bold" font-size="13.6" fill="#d9282f" textLength="58.5" lengthAdjust="spacingAndGlyphs" stroke="#d9282f" stroke-width="0.5">списан</text>
<!-- woman -->
<circle cx="895.5" cy="374" r="8.6" fill="#1e4f9b"/>
<path d="M877 402 C876 386 886 379 896 379 C907 379 915 387 914 402 L908 398 L884 392 Z" fill="#1e4f9b"/>
<path d="M880 404 C880 396 882 392 885 390 C892 394 902 396 911 396 C912 400 912 404 911 407 C914 405 915 410 911 411 C909 418 903 423 896 423 C889 423 883 418 881 411 C877 410 877 405 880 404 Z" fill="#fff"/>
<path d="M885 405 Q888 407 891 405 M899 405 Q902 407 905 405" stroke="#223" stroke-width="0.8" fill="none"/>
<path d="M892 416 Q895.5 419 899 416 Z" fill="#1e4f9b"/>
<path d="M889 421 L889 432 L896 446 L902 432 L902 421 Z" fill="#fff"/>
<path d="M872 434 C876 431 884 430 889 431 L895 446 L902 431 C908 430 916 431 920 434 C923 450 922 480 919 505 L872 505 C869 480 868 450 872 434 Z" fill="#1e4f9b"/>
<path d="M894 444 L891 454 L896 459 L893 468 L894 479" stroke="#fff" stroke-width="1.1" fill="none"/>
<path d="M871 440 C868 455 870 470 873 486 L866 486 L838 470 L843 462 L867 474 Z" fill="#1e4f9b"/>
<path d="M921 440 C924 455 922 470 919 486 L926 486 L954 470 L949 462 L925 474 Z" fill="#1e4f9b"/>
<path d="M843 462 L838 470 L832 466 C829 463 828 460 829 457 L832 461 C832 455 836 454 838 457 C839 459 839 462 843 462 Z" fill="#fff"/><path d="M829 457 L826 452 M832 459 L830 451 M835 456 L834 450" stroke="#fff" stroke-width="1.2"/>
<path d="M949 462 L954 470 L960 466 C963 463 964 460 963 457 L960 461 C960 455 956 454 954 457 C953 459 953 462 949 462 Z" fill="#fff"/><path d="M963 457 L966 452 M960 459 L962 451 M957 456 L958 450" stroke="#fff" stroke-width="1.2"/>
<path d="M872 503 C850 505 836 510 837 520 C838 530 860 536 884 534 L896 530 L908 534 C932 536 952 530 953 520 C954 510 940 505 919 503 Z" fill="#1e4f9b"/>
<path d="M851 507.5 L896 527 L943 506.5" stroke="#fff" stroke-width="1.1" fill="none"/>
<path d="M868 538 C872 534 880 532 888 534 L892 532 L896 527 L900 532 C910 532 918 536 922 540 C914 542 904 540 898 536 L890 538 C884 542 874 543 868 541 Z" fill="#0a0a0a"/>
<path d="M893 530 L896 527 L901 533 L896 536 Z" fill="#fff"/>
<path d="M772 540 H861 M931 540 H983" stroke="#1e4f9b" stroke-width="1.6"/>
<ellipse cx="895.5" cy="555.5" rx="38" ry="6" fill="#1e4f9b"/>
</g></svg>
<div style="left:1137px;top:87px;width:10px;height:637px;background:#6a6b6e;border-left:1px solid #5a5b5e"></div>
<div style="left:1137px;top:88px;width:10px;height:10px;background:#7d7e82;border:1px solid #5a5b5e"><svg style="left:1.5px;top:3px;" width="5" height="3" viewBox="0 0 5 3"><path d="M0 3 L5 3 L2.500 0 Z" fill="#38393b"/></svg></div>
<div style="left:1137px;top:714px;width:10px;height:10px;background:#7d7e82;border:1px solid #5a5b5e"><svg style="left:1.5px;top:3px;" width="5" height="3" viewBox="0 0 5 3"><path d="M0 0 L5 0 L2.500 3 Z" fill="#38393b"/></svg></div>
<div style="left:1137px;top:258px;width:10px;height:291px;background:linear-gradient(90deg,#86878b,#77787c);border:1px solid #5a5b5e"><svg style="left:1.5px;top:142px;" width="5" height="5" viewBox="0 0 5 5"><path d="M0 0.500h5M0 2.500h5M0 4.500h5" stroke="#55565a" stroke-width="1"/></svg></div>
<div style="left:1147px;top:63px;width:41px;height:687px;background:#5e5e5f"></div>
<div style="left:1147px;top:44px;width:3px;height:706px;background:linear-gradient(90deg,#6a6b6e,#5a5a5c)"></div>
<div style="left:1150px;top:63px;width:36px;height:687px;background:#5e5e5f"></div>
<div style="left:1185px;top:63px;width:1px;height:687px;background:#4c4c4e"></div>
<div style="left:1186px;top:63px;width:1px;height:687px;background:#7a7b7f"></div>
<div style="left:1152px;top:64px;width:32px;height:35px;background:linear-gradient(#7b7c80,#737478);border:1px solid #4f5053;border-radius:2px;box-shadow:inset 0 0 0 1px #808185"><svg style="left:2px;top:3px;" width="26" height="28" viewBox="0 0 26 28"><defs><linearGradient id="fg" x1="0" y1="0" x2="1" y2="1"><stop offset="0" stop-color="#d4d5d8"/><stop offset="1" stop-color="#707175"/></linearGradient></defs><path d="M2 21 L2 6 C2 4 3 3 5 3 L10 3 L12 5 L16 5 L16 21 Z" fill="url(#fg)" stroke="#55565a" stroke-width="0.6"/><path d="M2 21 L2 7 L9 7 L4 21 Z" fill="#e6e7e9" opacity=".7"/><path d="M12 8 C15 11 15 13 12 16 C9 13 9 11 12 8 Z M12 16 C15 19 15 21 12 24 C9 21 9 19 12 16 Z M4 16 C7 13 9 13 12 16 C9 19 7 19 4 16 Z M12 16 C15 13 17 13 20 16 C17 19 15 19 12 16 Z" fill="#f4ef9a" transform="rotate(45 12 16) translate(0 -2)"/><rect x="6" y="7" width="15" height="14" fill="#2a9fe6" opacity=".9"/><path d="M13.5 8 C16 11 16 12 13.5 14 C11 12 11 11 13.5 8 Z M13.5 14 C16 16 16 17 13.5 20 C11 17 11 16 13.5 14 Z M7 14 C10 11.5 11 11.5 13.5 14 C11 16.5 10 16.5 7 14 Z M13.5 14 C16 11.5 17 11.5 20 14 C17 16.5 16 16.5 13.5 14 Z" fill="#f6f2a8" transform="rotate(45 13.5 14)"/></svg></div>
<div style="left:1152px;top:103px;width:32px;height:35px;background:linear-gradient(#7b7c80,#737478);border:1px solid #4f5053;border-radius:2px;box-shadow:inset 0 0 0 1px #808185"><svg style="left:2px;top:3px;" width="26" height="28" viewBox="0 0 26 28"><defs><linearGradient id="fg" x1="0" y1="0" x2="1" y2="1"><stop offset="0" stop-color="#d4d5d8"/><stop offset="1" stop-color="#707175"/></linearGradient></defs><path d="M2 21 L2 6 C2 4 3 3 5 3 L10 3 L12 5 L16 5 L16 21 Z" fill="url(#fg)" stroke="#55565a" stroke-width="0.6"/><path d="M2 21 L2 7 L9 7 L4 21 Z" fill="#e6e7e9" opacity=".7"/><rect x="8" y="8" width="13" height="12" fill="#f4f4f4" stroke="#333" stroke-width="0.8"/><path d="M10 18 L14 12 L17 15 L19 13 L19 18 Z" fill="#333"/><rect x="8" y="8" width="13" height="2.5" fill="#444"/></svg></div>
<div style="left:1152px;top:143px;width:32px;height:35px;background:linear-gradient(#7b7c80,#737478);border:1px solid #4f5053;border-radius:2px;box-shadow:inset 0 0 0 1px #808185"><svg style="left:2px;top:3px;" width="26" height="28" viewBox="0 0 26 28"><defs><linearGradient id="fg" x1="0" y1="0" x2="1" y2="1"><stop offset="0" stop-color="#d4d5d8"/><stop offset="1" stop-color="#707175"/></linearGradient></defs><path d="M2 21 L2 6 C2 4 3 3 5 3 L10 3 L12 5 L16 5 L16 21 Z" fill="url(#fg)" stroke="#55565a" stroke-width="0.6"/><path d="M2 21 L2 7 L9 7 L4 21 Z" fill="#e6e7e9" opacity=".7"/><rect x="6" y="7" width="15" height="14" fill="#8e8f93"/><path d="M13.5 8 C16 11 16 12 13.5 14 C11 12 11 11 13.5 8 Z M13.5 14 C16 16 16 17 13.5 20 C11 17 11 16 13.5 14 Z M7 14 C10 11.5 11 11.5 13.5 14 C11 16.5 10 16.5 7 14 Z M13.5 14 C16 11.5 17 11.5 20 14 C17 16.5 16 16.5 13.5 14 Z" fill="#4e4f52" transform="rotate(45 13.5 14)"/></svg></div>
<div style="left:1152px;top:182px;width:32px;height:35px;background:linear-gradient(#7b7c80,#737478);border:1px solid #4f5053;border-radius:2px;box-shadow:inset 0 0 0 1px #808185"><svg style="left:2px;top:3px;" width="26" height="28" viewBox="0 0 26 28"><defs><linearGradient id="fg" x1="0" y1="0" x2="1" y2="1"><stop offset="0" stop-color="#d4d5d8"/><stop offset="1" stop-color="#707175"/></linearGradient></defs><path d="M2 21 L2 6 C2 4 3 3 5 3 L10 3 L12 5 L16 5 L16 21 Z" fill="url(#fg)" stroke="#55565a" stroke-width="0.6"/><path d="M2 21 L2 7 L9 7 L4 21 Z" fill="#e6e7e9" opacity=".7"/><rect x="7" y="7" width="14" height="14" fill="#fff"/><path d="M7 7h2v2h-2zM11 7h2v2h-2zM15 7h2v2h-2zM19 7h2v2h-2zM9 9h2v2h-2zM13 9h2v2h-2zM17 9h2v2h-2zM7 11h2v2h-2zM11 11h2v2h-2zM15 11h2v2h-2zM19 11h2v2h-2zM9 13h2v2h-2zM13 13h2v2h-2zM17 13h2v2h-2zM7 15h2v2h-2zM11 15h2v2h-2zM15 15h2v2h-2zM19 15h2v2h-2zM9 17h2v2h-2zM13 17h2v2h-2zM17 17h2v2h-2zM7 19h2v2h-2zM11 19h2v2h-2zM15 19h2v2h-2zM19 19h2v2h-2z" fill="#111"/></svg></div>
<div style="left:1152px;top:222px;width:32px;height:35px;background:linear-gradient(#7b7c80,#737478);border:1px solid #4f5053;border-radius:2px;box-shadow:inset 0 0 0 1px #808185"><svg style="left:2px;top:3px;" width="26" height="28" viewBox="0 0 26 28"><defs><linearGradient id="fg" x1="0" y1="0" x2="1" y2="1"><stop offset="0" stop-color="#d4d5d8"/><stop offset="1" stop-color="#707175"/></linearGradient></defs><path d="M2 21 L2 6 C2 4 3 3 5 3 L10 3 L12 5 L16 5 L16 21 Z" fill="url(#fg)" stroke="#55565a" stroke-width="0.6"/><path d="M2 21 L2 7 L9 7 L4 21 Z" fill="#e6e7e9" opacity=".7"/><rect x="8" y="7" width="6" height="5" fill="#fff"/><rect x="15" y="7" width="6" height="8" fill="#fff"/><rect x="8" y="13" width="6" height="8" fill="#fff"/><rect x="15" y="16" width="6" height="5" fill="#fff"/><rect x="7" y="6" width="15" height="16" fill="none" stroke="#444" stroke-width="0.6"/></svg></div>
<div style="left:1152px;top:261px;width:32px;height:35px;background:linear-gradient(#7b7c80,#737478);border:1px solid #4f5053;border-radius:2px;box-shadow:inset 0 0 0 1px #808185"><svg style="left:2px;top:3px;" width="26" height="28" viewBox="0 0 26 28"><defs><linearGradient id="fg" x1="0" y1="0" x2="1" y2="1"><stop offset="0" stop-color="#d4d5d8"/><stop offset="1" stop-color="#707175"/></linearGradient></defs><path d="M2 21 L2 6 C2 4 3 3 5 3 L10 3 L12 5 L16 5 L16 21 Z" fill="url(#fg)" stroke="#55565a" stroke-width="0.6"/><path d="M2 21 L2 7 L9 7 L4 21 Z" fill="#e6e7e9" opacity=".7"/><path d="M14 14 L7 8 L10 13 Z M14 14 L21 8 L18 13 Z M14 14 L8 21 L12 17 Z M14 14 L21 20 L17 16 Z M14 14 L14 6 L15.5 11 Z M14 14 L22 14 L17 15.5 Z" fill="#3a3b3d"/></svg></div>
<div style="left:1152px;top:300px;width:32px;height:35px;background:linear-gradient(#7b7c80,#737478);border:1px solid #4f5053;border-radius:2px;box-shadow:inset 0 0 0 1px #808185"><svg style="left:2px;top:3px;" width="26" height="28" viewBox="0 0 26 28"><defs><linearGradient id="fg" x1="0" y1="0" x2="1" y2="1"><stop offset="0" stop-color="#d4d5d8"/><stop offset="1" stop-color="#707175"/></linearGradient></defs><path d="M2 21 L2 6 C2 4 3 3 5 3 L10 3 L12 5 L16 5 L16 21 Z" fill="url(#fg)" stroke="#55565a" stroke-width="0.6"/><path d="M2 21 L2 7 L9 7 L4 21 Z" fill="#e6e7e9" opacity=".7"/><rect x="8" y="8" width="13" height="12" fill="#f4f4f4" stroke="#333" stroke-width="0.8"/><path d="M9 19 L12 12 L14 16 L17 10 L20 19 Z" fill="#111"/></svg></div>
<div style="left:1152px;top:340px;width:32px;height:35px;background:linear-gradient(#7b7c80,#737478);border:1px solid #4f5053;border-radius:2px;box-shadow:inset 0 0 0 1px #808185"><svg style="left:2px;top:3px;" width="26" height="28" viewBox="0 0 26 28"><defs><linearGradient id="fg" x1="0" y1="0" x2="1" y2="1"><stop offset="0" stop-color="#d4d5d8"/><stop offset="1" stop-color="#707175"/></linearGradient></defs><path d="M2 21 L2 6 C2 4 3 3 5 3 L10 3 L12 5 L16 5 L16 21 Z" fill="url(#fg)" stroke="#55565a" stroke-width="0.6"/><path d="M2 21 L2 7 L9 7 L4 21 Z" fill="#e6e7e9" opacity=".7"/><path d="M9 11 L16 9 L21 11 L21 19 L14 21 L9 19 Z" fill="#f4f4f4" stroke="#333" stroke-width="0.8"/><path d="M9 11 L14 13 L21 11 M14 13 L14 21" stroke="#333" stroke-width="0.8" fill="none"/></svg></div>
<div style="left:1152px;top:379px;width:32px;height:35px;background:linear-gradient(#7b7c80,#737478);border:1px solid #4f5053;border-radius:2px;box-shadow:inset 0 0 0 1px #808185"><svg style="left:2px;top:3px;" width="26" height="28" viewBox="0 0 26 28"><defs><linearGradient id="fg" x1="0" y1="0" x2="1" y2="1"><stop offset="0" stop-color="#d4d5d8"/><stop offset="1" stop-color="#707175"/></linearGradient></defs><path d="M2 21 L2 6 C2 4 3 3 5 3 L10 3 L12 5 L16 5 L16 21 Z" fill="url(#fg)" stroke="#55565a" stroke-width="0.6"/><path d="M2 21 L2 7 L9 7 L4 21 Z" fill="#e6e7e9" opacity=".7"/><circle cx="15" cy="8" r="1.8" fill="#2d2e30"/><path d="M8 11 L22 11 M15 10 L15 17 L13 24 M15 17 L17 24" stroke="#2d2e30" stroke-width="1.6" fill="none"/></svg></div>
<div class="pn" style="left:1187px;top:63px;width:213px;height:687px;"></div>
<div style="left:1396px;top:79px;width:4px;height:671px;background:#5a5a5c"></div>
<div style="left:1187px;top:62px;width:213px;height:2px;background:#68696c"></div>
<div class="dk" style="left:1187px;top:64px;width:212px;height:15px;"></div>
<div class="mb" style="left:1188px;top:65px;width:15px;height:14px;"><svg style="left:0px;top:0px;" width="15" height="15" viewBox="0 0 15 15"><path d="M3 4.5 L6 7.5 L3 10.5 Z" fill="#a3a4a7"/><path d="M7 5h5M7 7.5h5M7 10h5" stroke="#a3a4a7" stroke-width="1"/></svg></div>
<div class="tab" style="left:1204px;top:65px;width:65px;height:14px;"></div>
<svg style="left:1208px;top:66px;" width="16" height="14" viewBox="0 0 16 14"><rect x="4" y="4" width="11" height="9" fill="#fff" stroke="#555" stroke-width="0.5"/><rect x="1" y="1" width="11" height="8.5" fill="#fff" stroke="#d81f26" stroke-width="1.8"/></svg>
<span class="t" style="left:1227.5px;top:68px;font-size:10.5px;transform:scaleX(0.8457);transform-origin:0 0;color:#ececec">Navigator</span>
<div class="itab" style="left:1270px;top:65px;width:24px;height:14px;"><svg style="left:0px;top:0px;" width="24" height="15" viewBox="0 0 24 15"><rect x="6" y="2" width="12" height="11" fill="#9a9b9f"/><path d="M6 9 C10 5 14 11 18 7 L18 13 L6 13 Z" fill="#5a5b5e"/></svg></div>
<div class="itab" style="left:1295px;top:65px;width:24px;height:14px;"><svg style="left:0px;top:0px;" width="24" height="15" viewBox="0 0 24 15"><circle cx="12" cy="6" r="4" fill="#929397"/><path d="M5 13 L5 8 L9 8 L9 10 L15 10 L15 8 L19 8 L19 13 Z" fill="#a2a3a7"/></svg></div>
<div class="itab" style="left:1320px;top:65px;width:25px;height:14px;"><svg style="left:0px;top:0px;" width="24" height="15" viewBox="0 0 24 15"><circle cx="12.5" cy="7.5" r="6.5" fill="#4c4d50"/><circle cx="12.5" cy="4" r="1.5" fill="#b9babd"/><path d="M11 6.5h2.5v5h1v1.2h-4.5v-1.2h1v-3.8h-1z" fill="#b9babd"/></svg></div>
<div style="left:1188px;top:84px;width:206px;height:107px;background:#454546"></div>
<div style="left:1195px;top:84px;width:191px;height:107px;background:#fff;overflow:hidden"></div>
<svg style="left:0px;top:0px;" width="1400" height="788" viewBox="0 0 1400 788"><defs><clipPath id="nv"><rect x="1195" y="84" width="191" height="107"/></clipPath></defs><g clip-path="url(#nv)"><g transform="translate(1195 84) scale(0.2729) translate(-337 -209)">
<g filter="url(#wc)">
 <ellipse cx="770" cy="328" rx="64" ry="54" fill="#9ab5da" opacity=".72"/>
 <ellipse cx="826" cy="404" rx="48" ry="60" fill="#9ab5da" opacity=".7"/>
 <ellipse cx="800" cy="360" rx="40" ry="40" fill="#9ab5da" opacity=".5"/>
 <ellipse cx="838" cy="268" rx="48" ry="36" fill="#b4c6e2" opacity=".5"/>
 <ellipse cx="728" cy="300" rx="30" ry="36" fill="#b4c6e2" opacity=".45"/>
 <ellipse cx="770" cy="440" rx="40" ry="30" fill="#c3d2e8" opacity=".4"/>
 <ellipse cx="892" cy="320" rx="34" ry="58" fill="#cfb4d0" opacity=".6"/>
 <ellipse cx="880" cy="258" rx="48" ry="30" fill="#dccde2" opacity=".3"/>
 <ellipse cx="968" cy="408" rx="46" ry="62" fill="#e8a0a9" opacity=".7"/>
 <ellipse cx="930" cy="292" rx="42" ry="44" fill="#edb6bf" opacity=".4"/>
 <ellipse cx="1004" cy="345" rx="26" ry="50" fill="#f0c0c6" opacity=".3"/>
 <ellipse cx="990" cy="510" rx="40" ry="62" fill="#efb4bb" opacity=".6"/>
 <ellipse cx="945" cy="480" rx="42" ry="42" fill="#efbcc2" opacity=".4"/>
 <ellipse cx="826" cy="508" rx="46" ry="32" fill="#f0c6cb" opacity=".4"/>
</g>
<g filter="url(#wc2)">
 <ellipse cx="752" cy="335" rx="26" ry="20" fill="#8fadd6" opacity=".4"/>
 <ellipse cx="832" cy="410" rx="22" ry="28" fill="#8fadd6" opacity=".4"/>
 <ellipse cx="972" cy="410" rx="26" ry="32" fill="#e3939d" opacity=".3"/>
</g>

<!-- judge bubble -->
<circle cx="836.5" cy="334" r="31.5" fill="#1e4f9b"/>
<path d="M840 362 C850 366 848 372 856 373 C862 376 868 373 864 370 C858 368 860 362 856 356 Z" fill="#1e4f9b"/>
<ellipse cx="840.5" cy="292" rx="17.5" ry="16.5" fill="#1e4f9b"/>
<path d="M824 292 L824 306 C826 312 834 312 838 308 L838 292 Z" fill="#1e4f9b"/>
<path d="M851 286 C858 288 860 297 858 303 C857 309 852 312 848 311 Z" fill="#1e4f9b"/>
<path d="M838 290 C842 286 850 286 853 290 L853 303 C852 309 847 312 844 312 L845 316 L836 316 L838 308 Z" fill="#fff"/>
<path d="M823.5 293h14M823.5 296.5h14M823.5 300h14" stroke="#fff" stroke-width="1"/>
<circle cx="842.500" cy="297.500" r="0.900" fill="#111"/><circle cx="849.500" cy="296.800" r="0.900" fill="#111"/><path d="M840.500 295 L844 294.300 M847.500 293.800 L851 294.200" stroke="#222" stroke-width="0.700"/><path d="M842 303.500 Q844 301.500 846.500 302.800 Q849 301 851.500 302.500" stroke="#1e4f9b" stroke-width="1.300" fill="none"/><path d="M843.500 306 Q846.500 308.500 849.500 305.500" stroke="#222" stroke-width="0.800" fill="none"/>
<path d="M826 316 C828 312 834 313 837 314 L846 322 L852 314 C858 315 862 320 866 326 L876 328 L877 335 L862 336 L863 343 L826 343 Z" fill="#0a0a0a"/>
<path d="M837 314 L840 330 L848 331 L851 314 Z" fill="#fff"/>
<path d="M839 316 L849 319 L849 316 L839 319 Z" fill="#e9a0a8"/>
<path d="M832 320 C830 330 832 338 834 343" stroke="#ccc" stroke-width="0.6" fill="none"/>
<path d="M876 328 L884 326 L885 333 L877 335 Z" fill="#fff"/>
<path d="M881 330 L888 316" stroke="#1e4f9b" stroke-width="2"/>
<rect x="882.5" y="311.5" width="13" height="7.5" rx="1" fill="#1e4f9b" transform="rotate(27 889 315)"/>
<path d="M824 344.5 H902" stroke="#fff" stroke-width="2.6" stroke-linecap="round"/>
<text x="740" y="336" font-family="Liberation Sans, sans-serif" font-weight="bold" font-size="10.4" fill="#1e4f9b" textLength="56.5" lengthAdjust="spacingAndGlyphs" stroke="#1e4f9b" stroke-width="0.5">ВАШ ДОЛГ</text>
<text x="895" y="336.3" font-family="Liberation Sans, sans-serif" font-weight="bold" font-size="13.6" fill="#d9282f" textLength="58.5" lengthAdjust="spacingAndGlyphs" stroke="#d9282f" stroke-width="0.5">списан</text>
<!-- woman -->
<circle cx="895.5" cy="374" r="8.6" fill="#1e4f9b"/>
<path d="M877 402 C876 386 886 379 896 379 C907 379 915 387 914 402 L908 398 L884 392 Z" fill="#1e4f9b"/>
<path d="M880 404 C880 396 882 392 885 390 C892 394 902 396 911 396 C912 400 912 404 911 407 C914 405 915 410 911 411 C909 418 903 423 896 423 C889 423 883 418 881 411 C877 410 877 405 880 404 Z" fill="#fff"/>
<path d="M885 405 Q888 407 891 405 M899 405 Q902 407 905 405" stroke="#223" stroke-width="0.8" fill="none"/>
<path d="M892 416 Q895.5 419 899 416 Z" fill="#1e4f9b"/>
<path d="M889 421 L889 432 L896 446 L902 432 L902 421 Z" fill="#fff"/>
<path d="M872 434 C876 431 884 430 889 431 L895 446 L902 431 C908 430 916 431 920 434 C923 450 922 480 919 505 L872 505 C869 480 868 450 872 434 Z" fill="#1e4f9b"/>
<path d="M894 444 L891 454 L896 459 L893 468 L894 479" stroke="#fff" stroke-width="1.1" fill="none"/>
<path d="M871 440 C868 455 870 470 873 486 L866 486 L838 470 L843 462 L867 474 Z" fill="#1e4f9b"/>
<path d="M921 440 C924 455 922 470 919 486 L926 486 L954 470 L949 462 L925 474 Z" fill="#1e4f9b"/>
<path d="M843 462 L838 470 L832 466 C829 463 828 460 829 457 L832 461 C832 455 836 454 838 457 C839 459 839 462 843 462 Z" fill="#fff"/><path d="M829 457 L826 452 M832 459 L830 451 M835 456 L834 450" stroke="#fff" stroke-width="1.2"/>
<path d="M949 462 L954 470 L960 466 C963 463 964 460 963 457 L960 461 C960 455 956 454 954 457 C953 459 953 462 949 462 Z" fill="#fff"/><path d="M963 457 L966 452 M960 459 L962 451 M957 456 L958 450" stroke="#fff" stroke-width="1.2"/>
<path d="M872 503 C850 505 836 510 837 520 C838 530 860 536 884 534 L896 530 L908 534 C932 536 952 530 953 520 C954 510 940 505 919 503 Z" fill="#1e4f9b"/>
<path d="M851 507.5 L896 527 L943 506.5" stroke="#fff" stroke-width="1.1" fill="none"/>
<path d="M868 538 C872 534 880 532 888 534 L892 532 L896 527 L900 532 C910 532 918 536 922 540 C914 542 904 540 898 536 L890 538 C884 542 874 543 868 541 Z" fill="#0a0a0a"/>
<path d="M893 530 L896 527 L901 533 L896 536 Z" fill="#fff"/>
<path d="M772 540 H861 M931 540 H983" stroke="#1e4f9b" stroke-width="1.6"/>
<ellipse cx="895.5" cy="555.5" rx="38" ry="6" fill="#1e4f9b"/>
</g></g></svg>
<div style="left:1187px;top:192px;width:209px;height:41px;background:#6e6f73"></div>
<div style="left:1190px;top:197px;width:70px;height:12px;background:#77787c;border:1px solid #505154"><svg style="left:1px;top:1px;" width="68" height="10" viewBox="0 0 68 10"><path d="M0 10 L68 0 L68 10 Z" fill="#38393b"/></svg></div>
<div style="left:1190px;top:215px;width:70px;height:12px;background:#77787c;border:1px solid #505154"><svg style="left:1px;top:1px;" width="68" height="10" viewBox="0 0 68 10"><path d="M0 0 C14 13 24 13 34 5 C44 -3 54 -1 68 10 L0 10 Z" fill="#38393b"/></svg></div>
<div style="left:1224px;top:193px;width:3px;height:37px;background:#77787c;border-left:1px solid #8e8f93;border-right:1px solid #505154"></div>
<span class="t" style="left:1283.6px;top:198px;font-size:10.5px;transform:scaleX(0.8319);transform-origin:0 0;">50.0</span>
<span class="t" style="left:1288.4px;top:216px;font-size:10.5px;transform:scaleX(0.8359);transform-origin:0 0;">0.0</span>
<svg style="left:1303px;top:196px;" width="15" height="15" viewBox="0 0 15 15"><path d="M9.500 9.500 L14 14.500" stroke="#3a3b3d" stroke-width="2.2"/><circle cx="6.5" cy="6.5" r="6" fill="#fff" stroke="#3a3b3d" stroke-width="0.8"/><circle cx="6.5" cy="6.5" r="4" fill="none" stroke="#222" stroke-width="1"/><path d="M4.300 6.5h4.400" stroke="#222" stroke-width="1.4"/></svg>
<svg style="left:1321px;top:196px;" width="15" height="15" viewBox="0 0 15 15"><path d="M9.500 9.500 L14 14.500" stroke="#3a3b3d" stroke-width="2.2"/><circle cx="6.5" cy="6.5" r="6" fill="#fff" stroke="#3a3b3d" stroke-width="0.8"/><circle cx="6.5" cy="6.5" r="4" fill="none" stroke="#222" stroke-width="1"/><path d="M4.300 6.5h4.400" stroke="#222" stroke-width="1.4"/><path d="M6.5 4.300v4.400" stroke="#222" stroke-width="1.4"/></svg>
<div style="left:1337px;top:194px;width:18px;height:18px;background:#2b2b2c;border:1px solid #222"><div style="left:3px;top:3px;width:10px;height:10px;border:1px solid #77787c;background:#2b2b2c"></div></div>
<div style="left:1359px;top:194px;width:17px;height:18px;background:#2d2e30"><svg style="left:0px;top:0px;" width="17" height="18" viewBox="0 0 17 18"><rect x="0" y="2" width="11" height="8" fill="#fff"/><rect x="4" y="8" width="12" height="8" fill="#fff" stroke="#333" stroke-width="0.5"/><path d="M6 5 L14 14" stroke="#111" stroke-width="1.8"/><path d="M5 4 L9 5 L6 8 Z M15 15 L11 14 L14 11 Z" fill="#111"/></svg></div>
<div style="left:1377px;top:194px;width:17px;height:18px;background:#2d2e30"><svg style="left:0px;top:0px;" width="17" height="18" viewBox="0 0 17 18"><rect x="1" y="3" width="15" height="14" fill="#fff"/><path d="M4 6 L13 14" stroke="#111" stroke-width="1.8"/><path d="M2.500 4.500 L7.500 5.500 L3.500 9 Z M14.500 15.500 L9.500 14.500 L13.500 11 Z" fill="#111"/></svg></div>
<svg style="left:1302px;top:214px;" width="17" height="16" viewBox="0 0 17 16"><path d="M4 13 C2 4 14 2 15 12" fill="none" stroke="#1d1d1e" stroke-width="2.4"/><path d="M0 9.500 L8 10.500 L3.500 16 Z" fill="#1d1d1e"/></svg>
<svg style="left:1320px;top:214px;" width="17" height="16" viewBox="0 0 17 16"><path d="M13 13 C15 4 3 2 2 12" fill="none" stroke="#1d1d1e" stroke-width="2.4"/><path d="M17 9.500 L9 10.500 L13.500 16 Z" fill="#1d1d1e"/></svg>
<svg style="left:1338px;top:214px;" width="16" height="16" viewBox="0 0 16 16"><path d="M8 1.500 L10.500 4.500 L6.500 4 Z" fill="#58595c" transform="rotate(0 8 8)"/><path d="M8 1.500 L10.500 4.500 L6.500 4 Z" fill="#58595c" transform="rotate(45 8 8)"/><path d="M8 1.500 L10.500 4.500 L6.500 4 Z" fill="#58595c" transform="rotate(90 8 8)"/><path d="M8 1.500 L10.500 4.500 L6.500 4 Z" fill="#58595c" transform="rotate(135 8 8)"/><path d="M8 1.500 L10.500 4.500 L6.500 4 Z" fill="#58595c" transform="rotate(180 8 8)"/><path d="M8 1.500 L10.500 4.500 L6.500 4 Z" fill="#58595c" transform="rotate(225 8 8)"/><path d="M8 1.500 L10.500 4.500 L6.500 4 Z" fill="#58595c" transform="rotate(270 8 8)"/><path d="M8 1.500 L10.500 4.500 L6.500 4 Z" fill="#58595c" transform="rotate(315 8 8)"/></svg>
<svg style="left:1359px;top:213px;" width="17" height="18" viewBox="0 0 17 18"><path d="M3 7 C4 0 13 0 14 7" fill="none" stroke="#2d2e30" stroke-width="2"/><path d="M8.500 8 v9" stroke="#222" stroke-width="1" stroke-dasharray="1.500 1"/><path d="M1 9 L6.500 13 L1 17 Z" fill="#fff"/><path d="M16 9 L10.500 13 L16 17 Z" fill="#1d1d1e"/></svg>
<svg style="left:1378px;top:213px;" width="17" height="18" viewBox="0 0 17 18"><path d="M7 3 C0 4 0 13 6 14" fill="none" stroke="#2d2e30" stroke-width="2"/><path d="M8 9 h9" stroke="#222" stroke-width="1" stroke-dasharray="1.500 1"/><path d="M8 1 L16 1 L12 7 Z" fill="#1d1d1e"/><path d="M8 17 L16 17 L12 11 Z" fill="#fff"/></svg>
<div class="dk" style="left:1187px;top:233px;width:212px;height:15px;"></div>
<div class="mb" style="left:1188px;top:234px;width:15px;height:14px;"><svg style="left:0px;top:0px;" width="15" height="15" viewBox="0 0 15 15"><path d="M3 4.5 L6 7.5 L3 10.5 Z" fill="#a3a4a7"/><path d="M7 5h5M7 7.5h5M7 10h5" stroke="#a3a4a7" stroke-width="1"/></svg></div>
<div class="tab" style="left:1204px;top:234px;width:82px;height:14px;"></div>
<svg style="left:1208px;top:234px;" width="17" height="15" viewBox="0 0 17 15"><rect x="1" y="10.500" width="14" height="3.500" fill="#111"/><rect x="1" y="13.500" width="14" height="1.200" fill="#eee"/><path d="M2 6 L6 10 C8 5 11 2 16 0 C11 3 8 7 6.500 12 Z" fill="#e0141c"/></svg>
<span class="t" style="left:1227.5px;top:237px;font-size:10.5px;transform:scaleX(0.7987);transform-origin:0 0;color:#ececec">Layer Property</span>
<div class="itab" style="left:1287px;top:234px;width:25px;height:14px;"><svg style="left:4px;top:1px;" width="17" height="13" viewBox="0 0 17 13"><path d="M2 3 h12 M2 5.500 h12 M2 8 h12" stroke="#8e8f93" stroke-width="1.400"/><circle cx="11" cy="10" r="3.500" fill="#a2a3a7"/></svg></div>
<div class="itab" style="left:1313px;top:234px;width:24px;height:14px;"><svg style="left:5px;top:1px;" width="14" height="13" viewBox="0 0 14 13"><path d="M5.500 0 h3 v4 L12 12 H2 L5.500 4 Z" fill="#a2a3a7"/><path d="M4 9 h6 l2 3 h-10 z" fill="#c6c7ca"/></svg></div>
<div style="left:1188px;top:253px;width:198px;height:146px;background:#7a7b7f;border:1px solid #5c5d60;border-right:0"></div>
<div style="left:1386px;top:253px;width:10px;height:146px;background:#6e6f73;border:1px solid #5a5b5e"></div>
<span class="t" style="left:1195.5px;top:256px;font-size:10.5px;transform:scaleX(0.9192);transform-origin:0 0;">Effect</span>
<div style="left:1222px;top:262px;width:162px;height:1px;background:#6b6c70"></div>
<div class="btn" style="left:1285px;top:269px;width:98px;height:17px;"></div>
<svg style="left:1289px;top:271px;" width="13" height="13" viewBox="0 0 13 13"><circle cx="6.500" cy="6.500" r="6" fill="#fff" stroke="#444" stroke-width="0.6"/><circle cx="6.500" cy="6.500" r="3.800" fill="#111"/></svg>
<svg style="left:1310px;top:271px;" width="13" height="13" viewBox="0 0 13 13"><circle cx="7.500" cy="5.500" r="5" fill="#4a6a8a" stroke="#333" stroke-width="0.5"/><circle cx="6" cy="7" r="5.500" fill="#2b8fe6"/></svg>
<div style="left:1331px;top:271px;width:13px;height:13px;background-color:#aaa;background-image:linear-gradient(45deg,#111 25%,transparent 25%,transparent 75%,#111 75%),linear-gradient(45deg,#111 25%,transparent 25%,transparent 75%,#111 75%);background-size:4px 4px;background-position:0 0,2px 2px;"></div>
<div style="left:1354px;top:272px;width:12px;height:12px;background:#fff"></div>
<div style="left:1352px;top:270px;width:12px;height:12px;background:#4db5f4"></div>
<svg style="left:1370px;top:275px;" width="8" height="5" viewBox="0 0 8 5"><path d="M0 0 L8 0 L4 5 Z" fill="#2d2e30"/></svg>
<span class="t" style="left:1195.5px;top:290px;font-size:10.5px;transform:scaleX(0.9406);transform-origin:0 0;">Expression color</span>
<div style="left:1271px;top:297px;width:113px;height:1px;background:#6b6c70"></div>
<div class="btn" style="left:1201px;top:306px;width:134px;height:17px;"></div>
<div style="left:1242px;top:308px;width:5px;height:13px;background:#f0727c"></div>
<div style="left:1247px;top:308px;width:5px;height:13px;background:#6fa7f2"></div>
<div style="left:1252px;top:308px;width:5px;height:13px;background:#7de07a"></div>
<span class="t" style="left:1261.5px;top:309px;font-size:10.5px;transform:scaleX(0.9167);transform-origin:0 0;">Color</span>
<svg style="left:1324px;top:312px;" width="8" height="5" viewBox="0 0 8 5"><path d="M0 0 L8 0 L4 5 Z" fill="#2d2e30"/></svg>
<span class="t" style="left:1195.5px;top:328px;font-size:10.5px;transform:scaleX(0.9637);transform-origin:0 0;">Tool navigation</span>
<div style="left:1266px;top:335px;width:118px;height:1px;background:#6b6c70"></div>
<div class="btn" style="left:1201px;top:340px;width:89px;height:21px;"><svg style="left:35px;top:1px;" width="20" height="19" viewBox="0 0 20 19"><text x="10" y="16" font-family="Liberation Serif, serif" font-size="20" font-weight="bold" text-anchor="middle" fill="#1f1f21">A</text></svg></div>
<div class="btn" style="left:1293px;top:340px;width:90px;height:21px;"><svg style="left:35px;top:2px;" width="20" height="17" viewBox="0 0 20 17"><ellipse cx="9.500" cy="7.500" rx="8.500" ry="6.800" fill="#f6f6f6" stroke="#999" stroke-width="0.4"/><path d="M11 13 L14 16.500 L14.500 12 Z" fill="#f6f6f6"/></svg></div>
<div class="dk" style="left:1187px;top:402px;width:212px;height:15px;"></div>
<div class="mb" style="left:1188px;top:403px;width:15px;height:14px;"><svg style="left:0px;top:0px;" width="15" height="15" viewBox="0 0 15 15"><path d="M3 4.5 L6 7.5 L3 10.5 Z" fill="#a3a4a7"/><path d="M7 5h5M7 7.5h5M7 10h5" stroke="#a3a4a7" stroke-width="1"/></svg></div>
<div class="tab" style="left:1204px;top:403px;width:47px;height:14px;"></div>
<svg style="left:1208px;top:404px;" width="14" height="13" viewBox="0 0 14 13"><path d="M1 3.500 L7 1 L13 3.500 L7 6 Z M1 6.500 L7 4 L13 6.500 L7 9 Z M1 9.500 L7 7 L13 9.500 L7 12 Z" fill="#f4f4f4" stroke="#444" stroke-width="0.7"/></svg>
<span class="t" style="left:1227.0px;top:406px;font-size:10.5px;transform:scaleX(0.7996);transform-origin:0 0;color:#ececec">Layer</span>
<div class="itab" style="left:1252px;top:403px;width:54px;height:14px;"></div>
<svg style="left:1258px;top:404px;" width="14" height="13" viewBox="0 0 14 13"><circle cx="7" cy="6.500" r="5.500" fill="none" stroke="#222" stroke-width="2"/><path d="M3 2 L8 4 L3 7 Z" fill="#222"/><circle cx="9.500" cy="8.500" r="3" fill="#ccc"/></svg>
<span class="t" style="left:1276.0px;top:406px;font-size:10.5px;transform:scaleX(0.8418);transform-origin:0 0;color:#8f9094">History</span>
<div class="itab" style="left:1308px;top:403px;width:73px;height:14px;"></div>
<svg style="left:1313px;top:405px;" width="17" height="11" viewBox="0 0 17 11"><path d="M0 4 L16 0 L16 3 L0 7 Z" fill="#55565a"/><path d="M2 3.500 L4 6 M6 2.500 L8 5 M10 1.500 L12 4" stroke="#aaa" stroke-width="0.8"/><rect x="1" y="7.500" width="14" height="3" fill="#8e8f93"/></svg>
<span class="t" style="left:1332.0px;top:406px;font-size:10.5px;transform:scaleX(0.8848);transform-origin:0 0;color:#8f9094">Auto Action</span>
<div class="btn" style="left:1188px;top:423px;width:103px;height:17px;"></div>
<span class="t" style="left:1217.7px;top:425px;font-size:10.5px;transform:scaleX(0.9457);transform-origin:0 0;">Normal</span>
<svg style="left:1280px;top:429px;" width="8" height="5" viewBox="0 0 8 5"><path d="M0 0 L8 0 L4 5 Z" fill="#2d2e30"/></svg>
<div style="left:1297px;top:426px;width:65px;height:8px;background-color:#f2f2f2;background-image:linear-gradient(45deg,#b8b8b8 25%,transparent 25%,transparent 75%,#b8b8b8 75%),linear-gradient(45deg,#b8b8b8 25%,transparent 25%,transparent 75%,#b8b8b8 75%);background-size:4px 4px;background-position:0 0,2px 2px;border:1px solid #55565a"><div style="left:0px;top:0px;width:63px;height:6px;background:linear-gradient(90deg,rgba(255,255,255,0),rgba(255,255,255,.75))"></div></div>
<div style="left:1362px;top:421px;width:2px;height:19px;background:#8e8f93;border-right:1px solid #4e4f52"></div>
<span class="t" style="left:1369.0px;top:426px;font-size:10.5px;transform:scaleX(0.8791);transform-origin:0 0;">100</span>
<svg style="left:1386.5px;top:425px;" width="7" height="13" viewBox="0 0 7 13"><path d="M0 5 L7 5 L3.500 0 Z M0 8 L7 8 L3.500 13 Z" fill="#2d2e30"/></svg>
<div class="btn" style="left:1188px;top:442px;width:31px;height:17px;"></div>
<div style="left:1190px;top:444px;width:15px;height:13px;background:#7d7e82;border:1px solid #3a3b3d"></div>
<div style="left:1206px;top:442px;width:1px;height:17px;background:#5a5b5e"></div>
<svg style="left:1209px;top:448px;" width="8" height="5" viewBox="0 0 8 5"><path d="M0 0 L8 0 L4 5 Z" fill="#2d2e30"/></svg>
<svg style="left:1245px;top:442px;" width="19" height="16" viewBox="0 0 19 16"><ellipse cx="9.500" cy="5" rx="8" ry="3.500" fill="none" stroke="#222" stroke-width="0.8" stroke-dasharray="2 1.200"/><path d="M1 8 C1 16 18 16 18 8 L18 7 C18 12 1 12 1 7 Z" fill="#eee" stroke="#222" stroke-width="0.6"/><ellipse cx="9.500" cy="8" rx="8.500" ry="3.600" fill="#1d1d1e"/></svg>
<svg style="left:1266px;top:441px;" width="12" height="18" viewBox="0 0 12 18"><path d="M4 6 L8 6 L10 18 L2 18 Z" fill="#e8e8e8" stroke="#333" stroke-width="0.6"/><rect x="4" y="2.500" width="4" height="3.500" fill="#333"/><path d="M0 2 L4 4 L0 6 Z M12 2 L8 4 L12 6 Z" fill="#fff"/><rect x="3" y="9" width="6" height="3" fill="#444"/></svg>
<svg style="left:1286px;top:441px;" width="9" height="18" viewBox="0 0 9 18"><path d="M1 1 C1 0 8 0 8 1 L8 11 L4.500 17 L1 11 Z" fill="#29a5e8" stroke="#222" stroke-width="0.5"/><path d="M1 8 L8 8 L8 11 L4.500 17 L1 11 Z" fill="#f2d233"/><path d="M3 14 L4.500 17 L6 14 Z" fill="#222"/></svg>
<svg style="left:1302px;top:441px;" width="14" height="18" viewBox="0 0 14 18"><path d="M3.500 8 L3.500 5 C3.500 0 10.500 0 10.500 5 L10.500 8" fill="none" stroke="#ddd" stroke-width="2"/><path d="M3.500 8 L3.500 5 C3.500 0 10.500 0 10.500 5 L10.500 8" fill="none" stroke="#444" stroke-width="0.5"/><rect x="1" y="8" width="12" height="9" rx="1" fill="#9a9b9f" stroke="#333" stroke-width="0.7"/><rect x="6" y="10.500" width="2" height="4" fill="#222"/></svg>
<svg style="left:1320px;top:442px;" width="16" height="17" viewBox="0 0 16 17"><path d="M2.500 6 L2.500 4 C2.500 0 7.500 0 7.500 4 L7.500 6" fill="none" stroke="#a2a3a7" stroke-width="1.400"/><rect x="1" y="6" width="8" height="6" fill="#8e8f93" stroke="#6a6b6f" stroke-width="0.6"/><path d="M9 10h3v3h-3zM12 13h3v3h-3zM6 13h3v3h-3z" fill="#a2a3a7"/></svg>
<div style="left:1337px;top:442px;width:29px;height:17px;background:#707175;border:1px solid #626366"><svg style="left:3px;top:2px;" width="23" height="13" viewBox="0 0 23 13"><rect x="2" y="3" width="10" height="8" fill="#7e7f83" stroke="#66676b" stroke-width="0.8"/><path d="M9 7 L14 12 M14 7 L9 12" stroke="#66676b" stroke-width="1.200"/><path d="M16 5 l6 0 l-3 4 z" fill="#5e5f62"/></svg></div>
<div style="left:1368px;top:442px;width:28px;height:17px;background:#707175;border:1px solid #626366"><svg style="left:3px;top:2px;" width="22" height="13" viewBox="0 0 22 13"><rect x="2" y="3" width="10" height="8" fill="#7e7f83" stroke="#66676b" stroke-width="0.8"/><path d="M9 7 L14 12 M14 7 L9 12" stroke="#66676b" stroke-width="1.200"/><path d="M15 5 l6 0 l-3 4 z" fill="#5e5f62"/></svg></div>
<div style="left:1188px;top:461px;width:17px;height:20px;background:#66676b;border:1px solid #55565a"><svg style="left:1px;top:3px;" width="14" height="13" viewBox="0 0 14 13"><path d="M1 3.500 L7 1 L13 3.500 L7 6 Z M1 6.500 L7 4 L13 6.500 L7 9 Z M1 9.500 L7 7 L13 9.500 L7 12 Z" fill="#f4f4f4" stroke="#444" stroke-width="0.7"/></svg></div>
<svg style="left:1252px;top:461px;" width="15" height="20" viewBox="0 0 15 20"><path d="M0.500 0.500 L14.500 0.500 L14.500 14 L10 19.500 L0.500 19.500 Z" fill="#fdfdfd" stroke="#888" stroke-width="0.6"/><path d="M14.500 14 L10 14 L10 19.500" fill="#cfcfcf"/></svg>
<svg style="left:1270px;top:462px;" width="16" height="19" viewBox="0 0 16 19"><path d="M0.500 0.500 L11.500 0.500 L11.500 16.500 L0.500 16.500 Z" fill="#e4e4e4" stroke="#888" stroke-width="0.6"/><rect x="9" y="11" width="6.500" height="6.500" fill="#eee" stroke="#444" stroke-width="0.7"/><path d="M10.500 14h3.500M12.250 12.500v3.500" stroke="#444" stroke-width="0.7"/></svg>
<svg style="left:1288px;top:462px;" width="17" height="18" viewBox="0 0 17 18"><path d="M0.500 16 L0.500 2 L5 2 L6.500 4 L12 4 L12 16 Z" fill="#bdbec1" stroke="#66676b" stroke-width="0.6"/><path d="M8 9 L16.500 9 L16.500 17.500 L12 17.500 L8 14 Z" fill="#f6f6f6" stroke="#888" stroke-width="0.5"/></svg>
<svg style="left:1309px;top:463px;" width="12" height="17" viewBox="0 0 12 17"><path d="M6 0 L10 4 H8 V8 H4 V4 H2 Z M6 16 L1 10 H4 V8 H8 V10 H11 Z" fill="#6a6b6f" stroke="#606165" stroke-width="0.5"/></svg>
<svg style="left:1324px;top:462px;" width="16" height="18" viewBox="0 0 16 18"><path d="M1 5 L8 1 L15 5 L8 9 Z" fill="#333" stroke="#222" stroke-width="0.6"/><path d="M1 11 L8 7 L15 11 L8 16 Z" fill="#fafafa" stroke="#444" stroke-width="0.6"/><path d="M8 3 V10 M5 8 L8 11.500 L11 8" stroke="#fff" stroke-width="1.600" fill="none"/><path d="M8 3 V10" stroke="#111" stroke-width="0.6"/></svg>
<svg style="left:1342px;top:464px;" width="18" height="14" viewBox="0 0 18 14"><rect x="0.500" y="0.500" width="17" height="13" fill="#2a2a2b" stroke="#ddd" stroke-width="0.8"/><circle cx="9" cy="7" r="4.200" fill="#fafafa"/></svg>
<svg style="left:1361px;top:462px;" width="16" height="18" viewBox="0 0 16 18"><path d="M4 0 V10 M1 7 L4 11 L7 7" stroke="#66676b" stroke-width="1.600" fill="none"/><rect x="5" y="6" width="10" height="8" fill="#8a8b8f" stroke="#6a6b6f" stroke-width="0.6"/><circle cx="10" cy="10" r="2.500" fill="#77787c"/></svg>
<svg style="left:1380px;top:461px;" width="15" height="20" viewBox="0 0 15 20"><path d="M2 6 L13 6 L12 19 L3 19 Z" fill="#f6f6f6" stroke="#666" stroke-width="0.6"/><ellipse cx="7.500" cy="5.500" rx="6.800" ry="2.500" fill="#f0f0f0" stroke="#555" stroke-width="0.8"/><path d="M5 2 h5" stroke="#555" stroke-width="1.400"/><path d="M5.500 9v8M7.500 9v8M9.500 9v8" stroke="#888" stroke-width="0.8"/></svg>
<div style="left:1188px;top:482px;width:198px;height:232px;background:#7b7c80;border-top:1px solid #505154;border-left:1px solid #5a5b5e"></div>
<div style="left:1386px;top:482px;width:10px;height:232px;background:#6e6f73;border:1px solid #5a5b5e"></div>
<div style="left:1188px;top:483px;width:198px;height:26px;border-bottom:1px solid #5e5f62;border-top:1px solid #86878b"></div><div style="left:1207px;top:483px;width:1px;height:26px;background:#606165"></div><div style="left:1223px;top:483px;width:1px;height:26px;background:#606165"></div><svg style="left:1193px;top:492px;" width="11" height="7" viewBox="0 0 14 9"><path d="M0 4.500 C3 0 11 0 14 4.500 C11 9 3 9 0 4.500 Z" fill="#f4f4f4" stroke="#222" stroke-width="0.7"/><circle cx="7" cy="4.500" r="3" fill="#111"/><circle cx="6" cy="3.500" r="0.900" fill="#fff"/><path d="M0 4.500 C3 0 11 0 14 4.500" fill="none" stroke="#111" stroke-width="1.300"/></svg><div style="left:1228px;top:487px;width:25px;height:19px;background-color:#fff;background-image:linear-gradient(45deg,#dadada 25%,transparent 25%,transparent 75%,#dadada 75%),linear-gradient(45deg,#dadada 25%,transparent 25%,transparent 75%,#dadada 75%);background-size:6px 6px;background-position:0 0,3px 3px;border:1px solid #2a2b2d;border-bottom-width:2px;overflow:hidden"><span class="t" style="left:1px;top:5px;font-size:6px;font-weight:bold;color:#d9282f;letter-spacing:-0.3px;transform:scaleX(1.05);transform-origin:0 0">списан</span></div><svg style="left:1257px;top:484px;" width="18" height="18" viewBox="0 0 18 18"><rect x="0.300" y="0.300" width="17.400" height="17.400" rx="1.500" fill="#f6f6f6" stroke="#222" stroke-width="0.6"/><text x="7.500" y="13" font-family="Liberation Serif, serif" font-size="15" font-weight="bold" text-anchor="middle" fill="#111">A</text><rect x="11" y="10.500" width="5" height="5" fill="#eee" stroke="#333" stroke-width="0.6"/><rect x="13" y="12.500" width="4" height="4" fill="#eee" stroke="#333" stroke-width="0.6"/></svg><span class="t" style="left:1277.4px;top:485px;font-size:10.5px;transform:scaleX(0.8869);transform-origin:0 0;">100 % Normal</span><span class="t" style="left:1277.4px;top:496px;font-size:10.5px;transform:scaleX(0.9617);transform-origin:0 0;">списан</span>
<div style="left:1188px;top:509px;width:198px;height:27px;border-bottom:1px solid #5e5f62;border-top:1px solid #86878b"></div><div style="left:1224px;top:509px;width:162px;height:27px;background:linear-gradient(#819fb1,#6a899b);border:1px solid #9bb8c9"></div><div style="left:1207px;top:509px;width:1px;height:27px;background:#606165"></div><div style="left:1223px;top:509px;width:1px;height:27px;background:#606165"></div><svg style="left:1193px;top:519px;" width="11" height="7" viewBox="0 0 14 9"><path d="M0 4.500 C3 0 11 0 14 4.500 C11 9 3 9 0 4.500 Z" fill="#f4f4f4" stroke="#222" stroke-width="0.7"/><circle cx="7" cy="4.500" r="3" fill="#111"/><circle cx="6" cy="3.500" r="0.900" fill="#fff"/><path d="M0 4.500 C3 0 11 0 14 4.500" fill="none" stroke="#111" stroke-width="1.300"/></svg><div style="left:1228px;top:513px;width:25px;height:19px;background-color:#fff;background-image:linear-gradient(45deg,#dadada 25%,transparent 25%,transparent 75%,#dadada 75%),linear-gradient(45deg,#dadada 25%,transparent 25%,transparent 75%,#dadada 75%);background-size:6px 6px;background-position:0 0,3px 3px;border:1px solid #cfe2ee;border-bottom-width:2px;overflow:hidden"><span class="t" style="left:1px;top:5px;font-size:6px;font-weight:bold;color:#1e4f9b;letter-spacing:-0.3px;transform:scaleX(0.72);transform-origin:0 0">ВАШ ДОЛГ</span></div><svg style="left:1257px;top:510px;" width="18" height="18" viewBox="0 0 18 18"><rect x="0.300" y="0.300" width="17.400" height="17.400" rx="1.500" fill="#f6f6f6" stroke="#222" stroke-width="0.6"/><text x="7.500" y="13" font-family="Liberation Serif, serif" font-size="15" font-weight="bold" text-anchor="middle" fill="#111">A</text><rect x="11" y="10.500" width="5" height="5" fill="#eee" stroke="#333" stroke-width="0.6"/><rect x="13" y="12.500" width="4" height="4" fill="#eee" stroke="#333" stroke-width="0.6"/></svg><span class="t" style="left:1277.4px;top:511px;font-size:10.5px;transform:scaleX(0.8869);transform-origin:0 0;">100 % Normal</span><span class="t" style="left:1277.4px;top:522px;font-size:10.5px;transform:scaleX(0.8807);transform-origin:0 0;">ВАШ ДОЛГ</span>
<div style="left:1188px;top:536px;width:198px;height:27px;border-bottom:1px solid #5e5f62;border-top:1px solid #86878b"></div><div style="left:1207px;top:536px;width:1px;height:27px;background:#606165"></div><div style="left:1223px;top:536px;width:1px;height:27px;background:#606165"></div><svg style="left:1193px;top:546px;" width="11" height="7" viewBox="0 0 14 9"><path d="M0 4.500 C3 0 11 0 14 4.500 C11 9 3 9 0 4.500 Z" fill="#f4f4f4" stroke="#222" stroke-width="0.7"/><circle cx="7" cy="4.500" r="3" fill="#111"/><circle cx="6" cy="3.500" r="0.900" fill="#fff"/><path d="M0 4.500 C3 0 11 0 14 4.500" fill="none" stroke="#111" stroke-width="1.300"/></svg><div style="left:1228px;top:540px;width:25px;height:19px;background-color:#fff;background-image:linear-gradient(45deg,#dadada 25%,transparent 25%,transparent 75%,#dadada 75%),linear-gradient(45deg,#dadada 25%,transparent 25%,transparent 75%,#dadada 75%);background-size:6px 6px;background-position:0 0,3px 3px;border:1px solid #2a2b2d;border-bottom-width:2px;overflow:hidden"><div style="left:16px;top:5px;width:3px;height:7px;background:#1e4f9b;opacity:.8"></div></div><span class="t" style="left:1256.0px;top:538px;font-size:10.5px;transform:scaleX(0.8809);transform-origin:0 0;">100 % Normal</span><span class="t" style="left:1256.0px;top:549px;font-size:10.5px;transform:scaleX(0.9649);transform-origin:0 0;">ъ-[Восстановлен] Copy</span>
<div style="left:1188px;top:563px;width:198px;height:27px;border-bottom:1px solid #5e5f62;border-top:1px solid #86878b"></div><div style="left:1207px;top:563px;width:1px;height:27px;background:#606165"></div><div style="left:1223px;top:563px;width:1px;height:27px;background:#606165"></div><svg style="left:1193px;top:573px;" width="11" height="7" viewBox="0 0 14 9"><path d="M0 4.500 C3 0 11 0 14 4.500 C11 9 3 9 0 4.500 Z" fill="#f4f4f4" stroke="#222" stroke-width="0.7"/><circle cx="7" cy="4.500" r="3" fill="#111"/><circle cx="6" cy="3.500" r="0.900" fill="#fff"/><path d="M0 4.500 C3 0 11 0 14 4.500" fill="none" stroke="#111" stroke-width="1.300"/></svg><div style="left:1228px;top:567px;width:25px;height:19px;background-color:#fff;background-image:linear-gradient(45deg,#dadada 25%,transparent 25%,transparent 75%,#dadada 75%),linear-gradient(45deg,#dadada 25%,transparent 25%,transparent 75%,#dadada 75%);background-size:6px 6px;background-position:0 0,3px 3px;border:1px solid #2a2b2d;border-bottom-width:2px;overflow:hidden"></div><span class="t" style="left:1256.0px;top:565px;font-size:10.5px;transform:scaleX(0.8809);transform-origin:0 0;">100 % Normal</span><span class="t" style="left:1256.0px;top:576px;font-size:10.5px;transform:scaleX(0.9631);transform-origin:0 0;">красота Copy</span>
<div style="left:1188px;top:590px;width:198px;height:27px;border-bottom:1px solid #5e5f62;border-top:1px solid #86878b"></div><div style="left:1207px;top:590px;width:1px;height:27px;background:#606165"></div><div style="left:1223px;top:590px;width:1px;height:27px;background:#606165"></div><svg style="left:1193px;top:600px;" width="11" height="7" viewBox="0 0 14 9"><path d="M0 4.500 C3 0 11 0 14 4.500 C11 9 3 9 0 4.500 Z" fill="#f4f4f4" stroke="#222" stroke-width="0.7"/><circle cx="7" cy="4.500" r="3" fill="#111"/><circle cx="6" cy="3.500" r="0.900" fill="#fff"/><path d="M0 4.500 C3 0 11 0 14 4.500" fill="none" stroke="#111" stroke-width="1.300"/></svg><div style="left:1228px;top:594px;width:25px;height:19px;background-color:#fff;background-image:linear-gradient(45deg,#dadada 25%,transparent 25%,transparent 75%,#dadada 75%),linear-gradient(45deg,#dadada 25%,transparent 25%,transparent 75%,#dadada 75%);background-size:6px 6px;background-position:0 0,3px 3px;border:1px solid #2a2b2d;border-bottom-width:2px;overflow:hidden"><div style="left:11px;top:2px;width:12px;height:14px;background:radial-gradient(#e9a3ab,rgba(255,255,255,0) 70%)"></div><div style="left:7px;top:1px;width:10px;height:12px;background:radial-gradient(#93b0d9,rgba(255,255,255,0) 70%)"></div></div><span class="t" style="left:1256.0px;top:592px;font-size:10.5px;transform:scaleX(0.8809);transform-origin:0 0;">100 % Normal</span><span class="t" style="left:1256.0px;top:603px;font-size:10.5px;transform:scaleX(0.8738);transform-origin:0 0;">Layer 1</span>
<div style="left:1188px;top:617px;width:198px;height:27px;border-bottom:1px solid #5e5f62;border-top:1px solid #86878b"></div><div style="left:1207px;top:617px;width:1px;height:27px;background:#606165"></div><div style="left:1223px;top:617px;width:1px;height:27px;background:#606165"></div><svg style="left:1193px;top:627px;" width="11" height="7" viewBox="0 0 14 9"><path d="M0 4.500 C3 0 11 0 14 4.500 C11 9 3 9 0 4.500 Z" fill="#f4f4f4" stroke="#222" stroke-width="0.7"/><circle cx="7" cy="4.500" r="3" fill="#111"/><circle cx="6" cy="3.500" r="0.900" fill="#fff"/><path d="M0 4.500 C3 0 11 0 14 4.500" fill="none" stroke="#111" stroke-width="1.300"/></svg><div style="left:1228px;top:621px;width:25px;height:19px;background:#fff;border:1px solid #2a2b2d"></div><svg style="left:1258px;top:619px;" width="17" height="17" viewBox="0 0 17 17"><rect x="0" y="0" width="17" height="17" rx="1.500" fill="#f4f4f4" stroke="#333" stroke-width="0.5"/><path d="M4 2.500 L10 2.500 L13 5.500 L13 14.500 L4 14.500 Z" fill="#fff" stroke="#555" stroke-width="0.7"/><path d="M10 2.500 L10 5.500 L13 5.500" fill="none" stroke="#555" stroke-width="0.7"/></svg><span class="t" style="left:1276.7px;top:630px;font-size:10.5px;transform:scaleX(0.9637);transform-origin:0 0;">Paper</span>
<svg style="left:1209px;top:516px;" width="13" height="14" viewBox="0 0 13 14"><path d="M12 0 L13 1 L6 9 L3 10 L4 7 Z" fill="#1d1d1e"/><path d="M3 10 L0 13 L4 12 Z" fill="#fafafa" stroke="#333" stroke-width="0.4"/></svg>
<div style="left:1188px;top:714px;width:208px;height:5px;background:#77787b;border-top:1px solid #5e5f62;border-bottom:1px solid #5e5f62"></div>
<div style="left:1283px;top:716px;width:14px;height:1px;background:repeating-linear-gradient(90deg,#a4a5a8 0 1px,transparent 1px 3px)"></div>
<div style="left:1188px;top:719px;width:208px;height:31px;background:#7b7c80;overflow:hidden"></div>
<div style="left:1188px;top:719px;width:198px;height:26px;border-bottom:1px solid #5e5f62;border-top:1px solid #86878b"></div><div style="left:1207px;top:719px;width:1px;height:26px;background:#606165"></div><div style="left:1223px;top:719px;width:1px;height:26px;background:#606165"></div><svg style="left:1193px;top:728px;" width="11" height="7" viewBox="0 0 14 9"><path d="M0 4.500 C3 0 11 0 14 4.500 C11 9 3 9 0 4.500 Z" fill="#f4f4f4" stroke="#222" stroke-width="0.7"/><circle cx="7" cy="4.500" r="3" fill="#111"/><circle cx="6" cy="3.500" r="0.900" fill="#fff"/><path d="M0 4.500 C3 0 11 0 14 4.500" fill="none" stroke="#111" stroke-width="1.300"/></svg><div style="left:1228px;top:723px;width:25px;height:19px;background-color:#fff;background-image:linear-gradient(45deg,#dadada 25%,transparent 25%,transparent 75%,#dadada 75%),linear-gradient(45deg,#dadada 25%,transparent 25%,transparent 75%,#dadada 75%);background-size:6px 6px;background-position:0 0,3px 3px;border:1px solid #2a2b2d;border-bottom-width:2px;overflow:hidden"><span class="t" style="left:1px;top:5px;font-size:6px;font-weight:bold;color:#d9282f;letter-spacing:-0.3px;transform:scaleX(1.05);transform-origin:0 0">списан</span></div><svg style="left:1257px;top:720px;" width="18" height="18" viewBox="0 0 18 18"><rect x="0.300" y="0.300" width="17.400" height="17.400" rx="1.500" fill="#f6f6f6" stroke="#222" stroke-width="0.6"/><text x="7.500" y="13" font-family="Liberation Serif, serif" font-size="15" font-weight="bold" text-anchor="middle" fill="#111">A</text><rect x="11" y="10.500" width="5" height="5" fill="#eee" stroke="#333" stroke-width="0.6"/><rect x="13" y="12.500" width="4" height="4" fill="#eee" stroke="#333" stroke-width="0.6"/></svg><span class="t" style="left:1277.4px;top:721px;font-size:10.5px;transform:scaleX(0.8869);transform-origin:0 0;">100 % Normal</span><span class="t" style="left:1277.4px;top:732px;font-size:10.5px;transform:scaleX(0.9617);transform-origin:0 0;">списан</span>
<div style="left:1224px;top:745px;width:162px;height:5px;background:#7f9db0;border-top:1px solid #a4c0d0"></div>
<div style="left:1228px;top:747px;width:25px;height:3px;background:#2a2b2d"></div>
<div style="left:1257px;top:747px;width:18px;height:3px;background:#f6f6f6;border:1px solid #222;border-bottom:0"></div>
<div style="left:1386px;top:719px;width:10px;height:31px;background:#6c6d71;border:1px solid #56575a"></div>
<div style="left:1386px;top:719px;width:10px;height:10px;background:#7b7c80;border:1px solid #55565a"><svg style="left:2px;top:3px;" width="5" height="3" viewBox="0 0 5 3"><path d="M0 3 L5 3 L2.500 0 Z" fill="#3a3b3d"/></svg></div>
<div style="left:1386px;top:739px;width:10px;height:10px;background:#7b7c80;border:1px solid #55565a"><svg style="left:2px;top:3px;" width="5" height="3" viewBox="0 0 5 3"><path d="M0 0 L5 0 L2.500 3 Z" fill="#3a3b3d"/></svg></div>
<div style="left:233px;top:44px;width:2px;height:706px;background:#67686c"></div>
<div style="left:235px;top:68px;width:2px;height:682px;background:#67686c"></div>
<div style="left:237px;top:724px;width:910px;height:26px;background:#5d5d5f"></div>
<div style="left:237px;top:724px;width:900px;height:12px;background:#6d6e72"></div>
<div style="left:1137px;top:724px;width:10px;height:12px;background:#77787b;border:1px solid #5a5b5e"></div>
<div style="left:238px;top:725px;width:44px;height:10px;background:#6d6e72"><svg style="left:0px;top:0px;" width="44" height="10" viewBox="0 0 44 10"><path d="M17 0 L44 0 L44 7.500 Z" fill="#47484b"/></svg></div>
<div style="left:282px;top:724px;width:3px;height:12px;background:#77787c;border-left:1px solid #8a8b8f;border-right:1px solid #4e4f52"></div>
<span class="t" style="left:240.0px;top:725px;font-size:10.5px;transform:scaleX(0.8564);transform-origin:0 0;color:#ececec">50.0</span>
<div style="left:285px;top:725px;width:43px;height:10px;background:#47484b"><svg style="left:0px;top:0px;" width="43" height="10" viewBox="0 0 43 10"><path d="M0 0 L33 0 L0 5.500 Z" fill="#6d6e72"/></svg></div>
<svg style="left:333px;top:725px;" width="11" height="11" viewBox="0 0 11 11"><path d="M7 7 L10.500 10.500" stroke="#2d2e30" stroke-width="1.800"/><circle cx="4.500" cy="4.500" r="4" fill="#f4f4f4" stroke="#2d2e30" stroke-width="0.800"/><path d="M2.800 4.500h3.400" stroke="#222" stroke-width="1.200"/></svg>
<svg style="left:351px;top:725px;" width="11" height="11" viewBox="0 0 11 11"><path d="M7 7 L10.500 10.500" stroke="#2d2e30" stroke-width="1.800"/><circle cx="4.500" cy="4.500" r="4" fill="#f4f4f4" stroke="#2d2e30" stroke-width="0.800"/><path d="M2.800 4.500h3.400" stroke="#222" stroke-width="1.200"/><path d="M4.500 2.800v3.400" stroke="#222" stroke-width="1.200"/></svg>
<div style="left:369px;top:725px;width:11px;height:11px;background:#1f1f20;border:1px solid #111"><div style="left:2px;top:2px;width:5px;height:5px;border:1px solid #8e8f93"></div></div>
<div style="left:384px;top:725px;width:45px;height:10px;background:#6d6e72"><svg style="left:0px;top:0px;" width="45" height="10" viewBox="0 0 45 10"><path d="M18 0 L45 0 L45 10 L38 10 C30 9 26 1 18 0 Z" fill="#47484b"/></svg></div>
<div style="left:429px;top:724px;width:3px;height:12px;background:#77787c;border-left:1px solid #8a8b8f;border-right:1px solid #4e4f52"></div>
<span class="t" style="left:388.0px;top:725px;font-size:10.5px;transform:scaleX(0.8359);transform-origin:0 0;color:#ececec">0.0</span>
<div style="left:432px;top:725px;width:41px;height:10px;background:#47484b"><svg style="left:0px;top:0px;" width="41" height="10" viewBox="0 0 41 10"><path d="M0 0 L7 0 C5 4 2 8 0 9 Z" fill="#6d6e72"/><path d="M24 0 L41 0 L41 10 Z" fill="#6d6e72"/></svg></div>
<svg style="left:478px;top:725px;" width="12" height="11" viewBox="0 0 12 11"><path d="M3 9 C1 3 10 1 10.500 8" fill="none" stroke="#1d1d1e" stroke-width="1.800"/><path d="M0 6 L6 7 L2.500 11 Z" fill="#1d1d1e"/></svg>
<svg style="left:496px;top:725px;" width="12" height="11" viewBox="0 0 12 11"><path d="M9 9 C11 3 2 1 1.500 8" fill="none" stroke="#1d1d1e" stroke-width="1.800"/><path d="M12 6 L6 7 L9.500 11 Z" fill="#1d1d1e"/></svg>
<svg style="left:514px;top:725px;" width="11" height="11" viewBox="0 0 11 11"><path d="M5.500 0.500 L7.500 3 L4.500 2.700 Z" fill="#3a3b3d" transform="rotate(0 5.500 5.500)"/><path d="M5.500 0.500 L7.500 3 L4.500 2.700 Z" fill="#3a3b3d" transform="rotate(45 5.500 5.500)"/><path d="M5.500 0.500 L7.500 3 L4.500 2.700 Z" fill="#3a3b3d" transform="rotate(90 5.500 5.500)"/><path d="M5.500 0.500 L7.500 3 L4.500 2.700 Z" fill="#3a3b3d" transform="rotate(135 5.500 5.500)"/><path d="M5.500 0.500 L7.500 3 L4.500 2.700 Z" fill="#3a3b3d" transform="rotate(180 5.500 5.500)"/><path d="M5.500 0.500 L7.500 3 L4.500 2.700 Z" fill="#3a3b3d" transform="rotate(225 5.500 5.500)"/><path d="M5.500 0.500 L7.500 3 L4.500 2.700 Z" fill="#3a3b3d" transform="rotate(270 5.500 5.500)"/><path d="M5.500 0.500 L7.500 3 L4.500 2.700 Z" fill="#3a3b3d" transform="rotate(315 5.500 5.500)"/></svg>
<div style="left:530px;top:724px;width:606px;height:12px;background:#6a6b6e;border-top:1px solid #5a5b5e;border-bottom:1px solid #5a5b5e"></div>
<div style="left:530px;top:725px;width:10px;height:10px;background:#7d7e82;border:1px solid #5a5b5e"><svg style="left:2px;top:1.5px;" width="3" height="5" viewBox="0 0 3 5"><path d="M3 0 L3 5 L0 2.500 Z" fill="#38393b"/></svg></div>
<div style="left:1126px;top:725px;width:10px;height:10px;background:#7d7e82;border:1px solid #5a5b5e"><svg style="left:3px;top:1.5px;" width="3" height="5" viewBox="0 0 3 5"><path d="M0 0 L0 5 L3 2.500 Z" fill="#38393b"/></svg></div>
<div style="left:705px;top:725px;width:255px;height:10px;background:linear-gradient(#85868a,#77787c);border:1px solid #5a5b5e"><svg style="left:124px;top:2px;" width="7" height="5" viewBox="0 0 7 5"><path d="M0.500 0v5M2.500 0v5M4.500 0v5" stroke="#4e4f52" stroke-width="1"/></svg></div>
<div style="left:235px;top:736px;width:18px;height:14px;background:linear-gradient(#707175,#606165);border:1px solid #505154"><svg style="left:3px;top:1.5px;" width="11" height="9" viewBox="0 0 11 9"><path d="M0.500 4.500 L5.500 0.500 L10.500 4.500 M0.500 8.500 L5.500 4.500 L10.500 8.500" fill="none" stroke="#a9aaad" stroke-width="1.600"/></svg></div>
<div style="left:0px;top:750px;width:233px;height:1px;background:#77787c"></div>
<div style="left:233px;top:750px;width:4px;height:1px;background:#67686c"></div>
<div style="left:237px;top:750px;width:910px;height:1px;background:#5d5d5f"></div>
<div style="left:1147px;top:750px;width:40px;height:1px;background:#5e5e5f"></div>
<div style="left:1187px;top:750px;width:37px;height:1px;background:#7b7c80"></div>
<div style="left:1224px;top:750px;width:162px;height:1px;background:#7f9db0"></div>
<div style="left:1386px;top:750px;width:14px;height:1px;background:#6e6f73"></div>
<div style="left:0px;top:751px;width:1400px;height:37px;background:linear-gradient(90deg,#34231f,#2a1b19 30%,#221514 70%,#1c1111)"></div>
<div style="left:0px;top:751px;width:44px;height:37px;background:#37261f"></div>
<svg style="left:14px;top:760px;" width="17" height="17" viewBox="0 0 17 17"><path d="M0 2.400 L7.200 1.400 V8 H0 Z M8.200 1.250 L17 0 V8 H8.200 Z M0 9 H7.200 V15.600 L0 14.600 Z M8.200 9 H17 V17 L8.200 15.750 Z" fill="#fff"/></svg>
<div style="left:44px;top:751px;width:313px;height:37px;background:#f3f3f3"></div>
<svg style="left:55px;top:761px;" width="16" height="16" viewBox="0 0 16 16"><circle cx="9.500" cy="6.500" r="5.300" fill="none" stroke="#222" stroke-width="1.400"/><path d="M5.700 10.300 L0.800 15.200" stroke="#222" stroke-width="1.400"/></svg>
<span class="t" style="left:80.5px;top:763px;font-size:14.5px;transform:scaleX(0.9187);transform-origin:0 0;color:#2b2b2b">Введите здесь текст для поиска</span>
<svg style="left:371px;top:761px;" width="16" height="16" viewBox="0 0 16 16"><rect x="2.500" y="4.500" width="7" height="7" fill="none" stroke="#fff" stroke-width="1.200"/><path d="M2.500 1 v2 M9.500 1 v2 M2.500 13 v2 M9.500 13 v2 M1 2 h10 M1 14 h10" stroke="#fff" stroke-width="1"/><path d="M13.500 2 v3 M13.500 7 v7" stroke="#fff" stroke-width="1.400"/></svg>
<div style="left:415px;top:759px;width:21px;height:21px;border-radius:50%;background:conic-gradient(from 60deg,#fbbc05 0 120deg,#34a853 120deg 240deg,#ea4335 240deg 360deg)"><div style="left:5.5px;top:5.5px;width:10px;height:10px;border-radius:50%;background:#4285f4;border:2px solid #fff"></div></div>
<div style="left:460px;top:758px;width:23px;height:23px;border-radius:50%;background:#fff"><svg style="left:0px;top:0px;" width="23" height="23" viewBox="0 0 23 23"><path d="M5.500 5 L11.500 12 L17.500 5 M11.500 12 V20" stroke="#e5241b" stroke-width="2.600" fill="none"/></svg></div>
<div style="left:506px;top:759px;width:20px;height:20px;background:#2a0634;border:1.500px solid #d291f5"><span class="t" style="left:2.500px;top:3.500px;font-size:12px;font-weight:bold;color:#e2a6ff;letter-spacing:-0.500px">Pr</span></div>
<div style="left:540px;top:751px;width:45px;height:37px;background:#5b4c49"></div>
<div style="left:551px;top:759px;width:20px;height:20px;background:linear-gradient(#fdfdfd,#d8d8d8);border-radius:1px"><svg style="left:2px;top:3px;" width="16" height="14" viewBox="0 0 16 14"><path d="M12.500 3 C9 0.500 2 2.500 2.500 7 C3 11.500 10.500 12 13 8 C14.500 5.500 11.500 3.800 9 4.500 C6.500 5.200 6 7.500 8 8.100 C9.500 8.500 10.500 7.500 10 6.500" fill="none" stroke="#222" stroke-width="1.900" stroke-linecap="round"/></svg></div>
<div style="left:408px;top:786px;width:36px;height:2px;background:#76b9ed"></div>
<div style="left:453px;top:786px;width:36px;height:2px;background:#76b9ed"></div>
<div style="left:540px;top:786px;width:45px;height:2px;background:#76b9ed"></div>
<svg style="left:1144px;top:765px;" width="13" height="8" viewBox="0 0 13 8"><path d="M1 7 L6.500 1.500 L12 7" fill="none" stroke="#fff" stroke-width="1.300"/></svg>
<svg style="left:1165px;top:764px;" width="16" height="11" viewBox="0 0 16 11"><rect x="2" y="2.500" width="12" height="7" fill="#fff"/><rect x="14" y="4.500" width="1.500" height="3" fill="#fff"/><path d="M0 1 h4 v3 h-4 z" fill="#fff"/><circle cx="2" cy="2.500" r="1.200" fill="#2a1b19"/></svg>
<svg style="left:1187px;top:762px;" width="15" height="14" viewBox="0 0 15 14"><path d="M2 13 C2 6 7 2 14 2" fill="none" stroke="#fff" stroke-width="1.300"/><path d="M5.500 13 C5.500 8.500 9 5.500 14 5.500" fill="none" stroke="#fff" stroke-width="1.300"/><path d="M9 13 C9 10.500 11 9 14 9" fill="none" stroke="#aaa" stroke-width="1.300"/><circle cx="13" cy="12.500" r="1.200" fill="#aaa"/></svg>
<svg style="left:1209px;top:762px;" width="17" height="14" viewBox="0 0 17 14"><path d="M1 5 h3 l4 -3.500 v11 l-4 -3.500 h-3 z" fill="none" stroke="#fff" stroke-width="1.100"/><path d="M10 4.500 C11.500 6 11.500 8 10 9.500 M12 2.500 C14.500 5 14.500 9 12 11.500 M14 1 C17.500 4.500 17.500 9.500 14 13" fill="none" stroke="#fff" stroke-width="1"/></svg>
<svg style="left:1234px;top:761px;" width="15" height="17" viewBox="0 0 15 17"><path d="M9 1.500 C11 -0.500 14 2 12 4.500 L6 12.500 C4 15 1 13 3 10.500 Z" fill="none" stroke="#fff" stroke-width="1.200"/><path d="M2 8 C5 5 9 9 13 6" fill="none" stroke="#fff" stroke-width="1.100"/><path d="M4 12 L2.500 16" stroke="#fff" stroke-width="1.100"/></svg>
<span class="t" style="left:1262.8px;top:765px;font-size:11.5px;transform:scaleX(0.8685);transform-origin:0 0;color:#fff">РУС</span>
<span class="t" style="left:1307.6px;top:756px;font-size:11.5px;transform:scaleX(0.8549);transform-origin:0 0;color:#fff">10:31</span>
<span class="t" style="left:1295.8px;top:773px;font-size:11.5px;transform:scaleX(0.8723);transform-origin:0 0;color:#fff">18.03.2020</span>
<svg style="left:1362px;top:761px;" width="18" height="16" viewBox="0 0 18 16"><path d="M1 1 H16 V12 H8 L5 15 V12 H1 Z" fill="#fff"/><path d="M3.500 4h10M3.500 6.500h10M3.500 9h7" stroke="#2a1b19" stroke-width="0.900"/></svg>
<div style="left:1369px;top:769px;width:16px;height:16px;border-radius:50%;background:#1c1111;border:1px solid #ddd"><span class="t" style="left:2px;top:2.500px;font-size:9px;font-weight:bold;color:#fff;letter-spacing:-0.300px">10</span></div>
<div style="left:1395px;top:751px;width:1px;height:37px;background:#6d605e"></div>
</body></html>
